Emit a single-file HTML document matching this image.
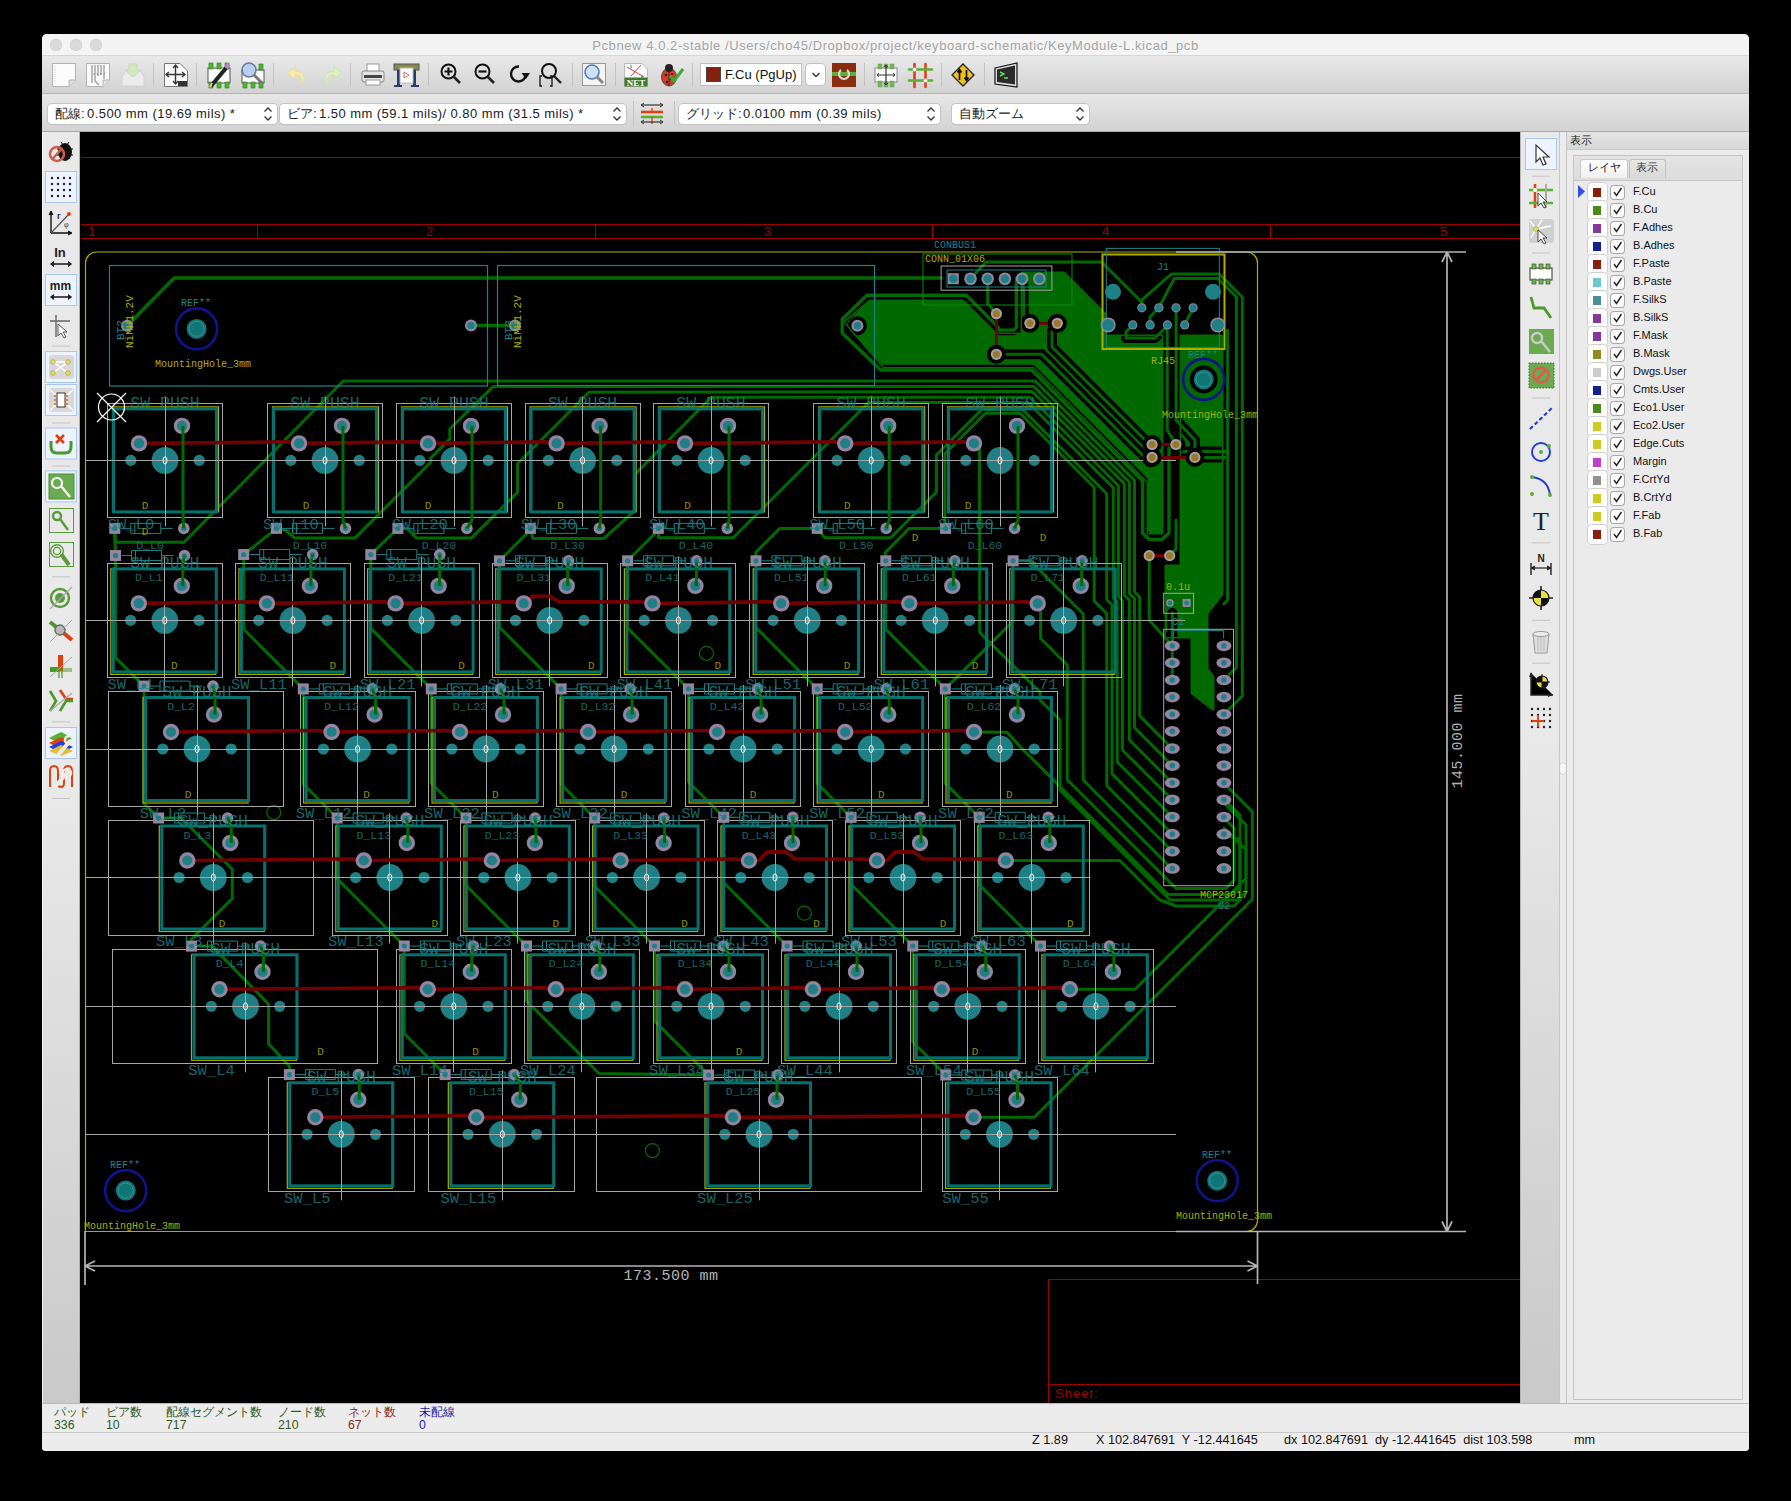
<!DOCTYPE html><html><head><meta charset="utf-8"><style>
*{margin:0;padding:0;box-sizing:border-box}
html,body{width:1791px;height:1501px;background:#000;overflow:hidden;font-family:"Liberation Sans",sans-serif}
div{position:absolute}
svg{position:absolute;left:0;top:0}
.sep{width:1px;background:#c2c2c2}
.combo{height:20px;background:#fff;border-radius:4px;box-shadow:0 0 0 1px #c4c4c4,0 1px 1px rgba(0,0,0,0.12);font-size:13px;color:#1a1a1a;line-height:20px;padding-left:7px;white-space:nowrap;overflow:hidden}
.sel{width:31px;height:31px;background:#eef5ff;border:1px solid #aac8f0}
.sw{width:19px;height:19px;background:#fff;border-radius:4px;box-shadow:0 0 0 1px #d0d0d0}
.cb{width:13px;height:13px;background:#fff;border-radius:3px;box-shadow:0 0 0 1px #a8a8a8}
.ln{font-size:11px;color:#111;line-height:13px}
.st{font-size:12.3px;line-height:13px}
</style></head><body>
<div style="left:42px;top:34px;width:1707px;height:1417px;background:#ececec;border-radius:5px 5px 4px 4px"></div>
<div style="left:42px;top:34px;width:1707px;height:22px;background:#f4f4f4;border-radius:5px 5px 0 0;border-bottom:1px solid #d6d6d6"></div>
<div style="left:50px;top:39px;width:12px;height:12px;border-radius:50%;background:#dadada;box-shadow:inset 0 0 0 0.5px #cacaca"></div>
<div style="left:70px;top:39px;width:12px;height:12px;border-radius:50%;background:#dadada;box-shadow:inset 0 0 0 0.5px #cacaca"></div>
<div style="left:90px;top:39px;width:12px;height:12px;border-radius:50%;background:#dadada;box-shadow:inset 0 0 0 0.5px #cacaca"></div>
<div style="left:42px;top:38px;width:1707px;text-align:center;font-size:13px;line-height:15px;color:#a4a4a4;letter-spacing:0.57px">Pcbnew 4.0.2-stable /Users/cho45/Dropbox/project/keyboard-schematic/KeyModule-L.kicad_pcb</div>
<div style="left:42px;top:56px;width:1707px;height:38px;background:linear-gradient(#e9e9e9,#d2d2d2);border-bottom:1px solid #b5b5b5"></div>
<div style="left:42px;top:94px;width:1707px;height:38px;background:linear-gradient(#e7e7e7,#d3d3d3);border-bottom:1px solid #a9a9a9"></div>
<div style="left:42px;top:132px;width:38px;height:1271px;background:linear-gradient(#e9e9e9 0px,#e9e9e9 668px,#c9c9c9 1271px);border-right:1px solid #b0b0b0;box-shadow:inset 1px 0 0 #f4f4f4"></div>
<div style="left:80px;top:132px;width:1440px;height:1271px;background:#000"></div>
<div style="left:1520px;top:132px;width:40px;height:1271px;background:linear-gradient(#e9e9e9 0px,#e9e9e9 600px,#c9c9c9 1271px);border-left:1px solid #b5b5b5;border-right:1px solid #c6c6c6"></div>
<div style="left:1560px;top:132px;width:7px;height:1271px;background:#ececec;border-right:1px solid #c4c4c4"></div>
<div style="left:1560px;top:763px;width:6px;height:11px;border-radius:3px;background:#f6f6f6;box-shadow:0 0 0 0.5px #c0c0c0"></div>
<div style="left:1567px;top:132px;width:182px;height:1271px;background:#ececec"></div>
<div style="left:1567px;top:132px;width:182px;height:18px;background:linear-gradient(#e4e4e4,#d8d8d8);border-bottom:1px solid #c8c8c8"></div>
<div class="ln" style="left:1570px;top:134px;font-size:11px;color:#222">表示</div>
<div style="left:1573px;top:155px;width:170px;height:1245px;border:1px solid #c4c4c4;background:#ebebeb"></div>
<div style="left:1574px;top:156px;width:168px;height:25px;background:linear-gradient(#e4e4e4,#dcdcdc);border-bottom:1px solid #c8c8c8"></div>
<div style="left:1580px;top:159px;width:48px;height:19px;background:linear-gradient(#ffffff,#f0f0f0);border:1px solid #c8c8c8;border-bottom:none;border-radius:3px 3px 0 0"></div>
<div style="left:1629px;top:159px;width:37px;height:19px;background:linear-gradient(#e8e8e8,#d8d8d8);border:1px solid #c0c0c0;border-bottom:none;border-radius:3px 3px 0 0"></div>
<div class="ln" style="left:1588px;top:161px;color:#222">レイヤ</div>
<div class="ln" style="left:1636px;top:161px;color:#333">表示</div>
<div class="sw" style="left:1588px;top:183px"></div>
<div style="left:1593px;top:188px;width:8px;height:9px;background:#84200c"></div>
<div class="cb" style="left:1611px;top:186px"></div>
<div class="ln" style="left:1633px;top:185px">F.Cu</div>
<div class="sw" style="left:1588px;top:201px"></div>
<div style="left:1593px;top:206px;width:8px;height:9px;background:#4a8a1a"></div>
<div class="cb" style="left:1611px;top:204px"></div>
<div class="ln" style="left:1633px;top:203px">B.Cu</div>
<div class="sw" style="left:1588px;top:219px"></div>
<div style="left:1593px;top:224px;width:8px;height:9px;background:#84389a"></div>
<div class="cb" style="left:1611px;top:222px"></div>
<div class="ln" style="left:1633px;top:221px">F.Adhes</div>
<div class="sw" style="left:1588px;top:237px"></div>
<div style="left:1593px;top:242px;width:8px;height:9px;background:#10208e"></div>
<div class="cb" style="left:1611px;top:240px"></div>
<div class="ln" style="left:1633px;top:239px">B.Adhes</div>
<div class="sw" style="left:1588px;top:255px"></div>
<div style="left:1593px;top:260px;width:8px;height:9px;background:#84200c"></div>
<div class="cb" style="left:1611px;top:258px"></div>
<div class="ln" style="left:1633px;top:257px">F.Paste</div>
<div class="sw" style="left:1588px;top:273px"></div>
<div style="left:1593px;top:278px;width:8px;height:9px;background:#70c4cc"></div>
<div class="cb" style="left:1611px;top:276px"></div>
<div class="ln" style="left:1633px;top:275px">B.Paste</div>
<div class="sw" style="left:1588px;top:291px"></div>
<div style="left:1593px;top:296px;width:8px;height:9px;background:#4a8e96"></div>
<div class="cb" style="left:1611px;top:294px"></div>
<div class="ln" style="left:1633px;top:293px">F.SilkS</div>
<div class="sw" style="left:1588px;top:309px"></div>
<div style="left:1593px;top:314px;width:8px;height:9px;background:#84389a"></div>
<div class="cb" style="left:1611px;top:312px"></div>
<div class="ln" style="left:1633px;top:311px">B.SilkS</div>
<div class="sw" style="left:1588px;top:327px"></div>
<div style="left:1593px;top:332px;width:8px;height:9px;background:#84389a"></div>
<div class="cb" style="left:1611px;top:330px"></div>
<div class="ln" style="left:1633px;top:329px">F.Mask</div>
<div class="sw" style="left:1588px;top:345px"></div>
<div style="left:1593px;top:350px;width:8px;height:9px;background:#8c8c20"></div>
<div class="cb" style="left:1611px;top:348px"></div>
<div class="ln" style="left:1633px;top:347px">B.Mask</div>
<div class="sw" style="left:1588px;top:363px"></div>
<div style="left:1593px;top:368px;width:8px;height:9px;background:#cccccc"></div>
<div class="cb" style="left:1611px;top:366px"></div>
<div class="ln" style="left:1633px;top:365px">Dwgs.User</div>
<div class="sw" style="left:1588px;top:381px"></div>
<div style="left:1593px;top:386px;width:8px;height:9px;background:#10208e"></div>
<div class="cb" style="left:1611px;top:384px"></div>
<div class="ln" style="left:1633px;top:383px">Cmts.User</div>
<div class="sw" style="left:1588px;top:399px"></div>
<div style="left:1593px;top:404px;width:8px;height:9px;background:#4a8a1a"></div>
<div class="cb" style="left:1611px;top:402px"></div>
<div class="ln" style="left:1633px;top:401px">Eco1.User</div>
<div class="sw" style="left:1588px;top:417px"></div>
<div style="left:1593px;top:422px;width:8px;height:9px;background:#cccc20"></div>
<div class="cb" style="left:1611px;top:420px"></div>
<div class="ln" style="left:1633px;top:419px">Eco2.User</div>
<div class="sw" style="left:1588px;top:435px"></div>
<div style="left:1593px;top:440px;width:8px;height:9px;background:#cccc20"></div>
<div class="cb" style="left:1611px;top:438px"></div>
<div class="ln" style="left:1633px;top:437px">Edge.Cuts</div>
<div class="sw" style="left:1588px;top:453px"></div>
<div style="left:1593px;top:458px;width:8px;height:9px;background:#c040cc"></div>
<div class="cb" style="left:1611px;top:456px"></div>
<div class="ln" style="left:1633px;top:455px">Margin</div>
<div class="sw" style="left:1588px;top:471px"></div>
<div style="left:1593px;top:476px;width:8px;height:9px;background:#909090"></div>
<div class="cb" style="left:1611px;top:474px"></div>
<div class="ln" style="left:1633px;top:473px">F.CrtYd</div>
<div class="sw" style="left:1588px;top:489px"></div>
<div style="left:1593px;top:494px;width:8px;height:9px;background:#cccc20"></div>
<div class="cb" style="left:1611px;top:492px"></div>
<div class="ln" style="left:1633px;top:491px">B.CrtYd</div>
<div class="sw" style="left:1588px;top:507px"></div>
<div style="left:1593px;top:512px;width:8px;height:9px;background:#cccc20"></div>
<div class="cb" style="left:1611px;top:510px"></div>
<div class="ln" style="left:1633px;top:509px">F.Fab</div>
<div class="sw" style="left:1588px;top:525px"></div>
<div style="left:1593px;top:530px;width:8px;height:9px;background:#84200c"></div>
<div class="cb" style="left:1611px;top:528px"></div>
<div class="ln" style="left:1633px;top:527px">B.Fab</div>
<div style="left:42px;top:1403px;width:1707px;height:48px;background:#ececec;border-top:1px solid #b8b8b8;border-radius:0 0 4px 4px"></div>
<div style="left:42px;top:1432px;width:1707px;height:1px;background:#c8c8c8"></div>
<div class="st" style="left:54px;top:1406px;color:#2f5a1e;font-size:11.5px">パッド</div>
<div class="st" style="left:54px;top:1419px;color:#2f5a1e">336</div>
<div class="st" style="left:106px;top:1406px;color:#2f5a1e;font-size:11.5px">ビア数</div>
<div class="st" style="left:106px;top:1419px;color:#2f5a1e">10</div>
<div class="st" style="left:166px;top:1406px;color:#2f5a1e;font-size:11.5px">配線セグメント数</div>
<div class="st" style="left:166px;top:1419px;color:#2f5a1e">717</div>
<div class="st" style="left:278px;top:1406px;color:#2f5a1e;font-size:11.5px">ノード数</div>
<div class="st" style="left:278px;top:1419px;color:#2f5a1e">210</div>
<div class="st" style="left:348px;top:1406px;color:#8a2a10;font-size:11.5px">ネット数</div>
<div class="st" style="left:348px;top:1419px;color:#8a2a10">67</div>
<div class="st" style="left:419px;top:1406px;color:#1c1caa;font-size:11.5px">未配線</div>
<div class="st" style="left:419px;top:1419px;color:#1c1caa">0</div>
<div class="st" style="left:1032px;top:1434px;color:#111;white-space:nowrap;font-size:12.7px">Z 1.89</div>
<div class="st" style="left:1096px;top:1434px;color:#111;white-space:nowrap;font-size:12.7px">X 102.847691&nbsp; Y -12.441645</div>
<div class="st" style="left:1284px;top:1434px;color:#111;white-space:nowrap;font-size:12.7px">dx 102.847691&nbsp; dy -12.441645&nbsp; dist 103.598</div>
<div class="st" style="left:1574px;top:1434px;color:#111;white-space:nowrap;font-size:12.7px">mm</div>
<div class="combo" style="left:48px;top:104px;width:229px"></div>
<div style="left:55px;top:105px;font-size:13px;line-height:17px;color:#1a1a1a;white-space:nowrap">配線:</div>
<div style="left:87px;top:105px;font-size:13px;line-height:17px;color:#1a1a1a;white-space:nowrap;letter-spacing:0.45px">0.500 mm (19.69 mils) *</div>
<svg width="1791" height="1501" style="pointer-events:none"><path d="M264.5 111.5 l3.5 -3.5 l3.5 3.5 M264.5 116.5 l3.5 3.5 l3.5 -3.5" fill="none" stroke="#333" stroke-width="1.3"/></svg>
<div class="combo" style="left:280px;top:104px;width:346px"></div>
<div style="left:287px;top:105px;font-size:13px;line-height:17px;color:#1a1a1a;white-space:nowrap">ビア:</div>
<div style="left:319px;top:105px;font-size:13px;line-height:17px;color:#1a1a1a;white-space:nowrap;letter-spacing:0.45px">1.50 mm (59.1 mils)/ 0.80 mm (31.5 mils) *</div>
<svg width="1791" height="1501" style="pointer-events:none"><path d="M613.5 111.5 l3.5 -3.5 l3.5 3.5 M613.5 116.5 l3.5 3.5 l3.5 -3.5" fill="none" stroke="#333" stroke-width="1.3"/></svg>
<div class="combo" style="left:679px;top:104px;width:261px"></div>
<div style="left:686px;top:105px;font-size:13px;line-height:17px;color:#1a1a1a;white-space:nowrap">グリッド:</div>
<div style="left:743px;top:105px;font-size:13px;line-height:17px;color:#1a1a1a;white-space:nowrap;letter-spacing:0.45px">0.0100 mm (0.39 mils)</div>
<svg width="1791" height="1501" style="pointer-events:none"><path d="M927.5 111.5 l3.5 -3.5 l3.5 3.5 M927.5 116.5 l3.5 3.5 l3.5 -3.5" fill="none" stroke="#333" stroke-width="1.3"/></svg>
<div class="combo" style="left:952px;top:104px;width:137px"></div>
<div style="left:959px;top:105px;font-size:13px;line-height:17px;color:#1a1a1a;white-space:nowrap">自動ズーム</div>
<svg width="1791" height="1501" style="pointer-events:none"><path d="M1076.5 111.5 l3.5 -3.5 l3.5 3.5 M1076.5 116.5 l3.5 3.5 l3.5 -3.5" fill="none" stroke="#333" stroke-width="1.3"/></svg>
<div style="left:701px;top:64px;width:100px;height:21px;background:#fff;box-shadow:0 0 0 1px #c0c0c0"></div>
<div style="left:707px;top:68px;width:13px;height:13px;background:#84200c;box-shadow:0 0 0 1px #444"></div>
<div style="left:725px;top:66px;font-size:13px;line-height:17px;color:#111">F.Cu (PgUp)</div>
<div style="left:806px;top:64px;width:19px;height:21px;background:#fff;border-radius:4px;box-shadow:0 0 0 1px #c0c0c0"></div>
<svg width="1791" height="1501"><path d="M812.5 73 l3.5 3.5 l3.5 -3.5" fill="none" stroke="#333" stroke-width="1.4"/></svg>
<svg width="1791" height="1501" viewBox="0 0 1791 1501" style="font-family:'Liberation Sans'"><g transform="translate(51 62)"><path d="M1.5 1.5 H24.5 V18 L18 24.5 H1.5 Z" fill="#fbfbfb" stroke="#b4b4b4"/><path d="M24.5 18 L18 18 L18 24.5" fill="#e0e0e0" stroke="#b4b4b4"/><path d="M4 4 V22" stroke="#d0d0d0" stroke-dasharray="1 1"/></g><g transform="translate(85 62)"><path d="M1.5 1.5 H24.5 V18 L18 24.5 H1.5 Z" fill="#fbfbfb" stroke="#b4b4b4"/><path d="M24.5 18 L18 18 L18 24.5" fill="#e0e0e0" stroke="#b4b4b4"/><path d="M7 3 V21 M10 3 V19 L14 23 M13 3 V14 M16 3 V13 M19 3 V17" stroke="#9a9a9a" stroke-width="1.3" fill="none"/><path d="M8 12 H20" stroke="#8a8a8a" stroke-dasharray="1.5 2"/></g><g transform="translate(120 62)"><path d="M2 15 L6 8 H20 L24 15 V24 H2 Z" fill="#ececec" stroke="#d4d4d4"/><path d="M9 2 H17 V8 H21 L13 15 L5 8 H9 Z" fill="#d4e8c0" stroke="#c4dcb0"/></g><g fill="#c2c2c2"><rect x="153" y="63" width="1" height="23"/><rect x="196" y="63" width="1" height="23"/><rect x="273" y="63" width="1" height="23"/><rect x="350" y="63" width="1" height="23"/><rect x="428" y="63" width="1" height="23"/><rect x="572" y="63" width="1" height="23"/><rect x="615" y="63" width="1" height="23"/><rect x="692" y="63" width="1" height="23"/><rect x="864" y="63" width="1" height="23"/><rect x="941" y="63" width="1" height="23"/><rect x="984" y="63" width="1" height="23"/></g><g transform="translate(163 62)"><path d="M1.5 1.5 H17 L24.5 9 V24.5 H1.5 Z" fill="#fbfbfb" stroke="#777"/><path d="M12.5 3 V22 M3.5 12.5 H22" stroke="#333" stroke-width="1.4"/><path d="M10 6 L12.5 3 L15 6 M10 19 L12.5 22 L15 19 M6 10 L3 12.5 L6 15 M19 10 L22 12.5 L19 15" fill="none" stroke="#333" stroke-width="1.3"/><rect x="15" y="19" width="9" height="5" fill="#333"/></g><g transform="translate(206 62)"><rect x="2" y="6" width="22" height="15" fill="#fff" stroke="#555"/><g fill="#4cb830" stroke="#2d7a1a" stroke-width="0.6"><rect x="3" y="1" width="4" height="6"/><rect x="11" y="1" width="4" height="6"/><rect x="19" y="1" width="4" height="6"/><rect x="3" y="20" width="4" height="6"/><rect x="11" y="20" width="4" height="6"/><rect x="19" y="20" width="4" height="6"/></g><path d="M5 24 L21 5" stroke="#222" stroke-width="4"/><path d="M20 6 L23 2" stroke="#c080d0" stroke-width="4"/><path d="M4 25 L6 21" stroke="#e8d070" stroke-width="2"/></g><g transform="translate(240 62)"><rect x="2" y="8" width="22" height="13" fill="#fff" stroke="#555"/><g fill="#4cb830" stroke="#2d7a1a" stroke-width="0.6"><rect x="3" y="20" width="4" height="6"/><rect x="11" y="20" width="4" height="6"/><rect x="19" y="20" width="4" height="6"/><rect x="19" y="2" width="4" height="6"/></g><circle cx="9" cy="8" r="7" fill="#b8d0ee" stroke="#6a7aa0" stroke-width="1.6"/><path d="M14 13 L22 21" stroke="#777" stroke-width="3"/></g><g transform="translate(284 62)"><path d="M16 23 C24 18 20 9 11 9 L11 5 L3 11 L11 17 L11 13 C17 13 19 18 16 23 Z" fill="#f4eab0" stroke="#eadc98"/></g><g transform="translate(319 62)"><path d="M10 23 C2 18 6 9 15 9 L15 5 L23 11 L15 17 L15 13 C9 13 7 18 10 23 Z" fill="#dcf0c0" stroke="#cce4ac"/></g><g transform="translate(360 62)"><rect x="7" y="2" width="12" height="8" fill="#fff" stroke="#999"/><rect x="2" y="9" width="22" height="11" rx="2" fill="#e4e4e4" stroke="#888"/><rect x="4" y="13" width="18" height="3" fill="#444"/><rect x="6" y="18" width="14" height="5" fill="#fff" stroke="#999"/></g><g transform="translate(393 62)"><rect x="1" y="2" width="25" height="6" fill="#8a8a50" stroke="#555"/><rect x="4" y="8" width="3" height="17" fill="#2a3a6a"/><rect x="20" y="8" width="3" height="17" fill="#2a3a6a"/><rect x="7" y="6" width="13" height="15" fill="#fff" stroke="#bbb"/><path d="M11 10 L16 13 L11 16 Z" fill="none" stroke="#d04040" stroke-width="0.8"/><rect x="1" y="23" width="8" height="2" fill="#2a3a6a"/><rect x="18" y="23" width="8" height="2" fill="#2a3a6a"/></g><g transform="translate(439 62)"><circle cx="9.5" cy="9.5" r="7" fill="none" stroke="#111" stroke-width="2"/><path d="M14.5 14.5 L21 21" stroke="#222" stroke-width="2.6"/><path d="M9.5 5.5 V13.5 M5.5 9.5 H13.5" stroke="#111" stroke-width="2.2"/></g><g transform="translate(473 62)"><circle cx="9.5" cy="9.5" r="7" fill="none" stroke="#111" stroke-width="2"/><path d="M14.5 14.5 L21 21" stroke="#222" stroke-width="2.6"/><path d="M5.5 9.5 H13.5" stroke="#111" stroke-width="2.2"/></g><g transform="translate(507 62)"><path d="M19 12 A7.5 7.5 0 1 1 12 4.5" fill="none" stroke="#111" stroke-width="2.4"/><path d="M14.5 11 L23 11 L19 17 Z" fill="#111"/></g><g transform="translate(538 62)"><circle cx="11" cy="9" r="7" fill="none" stroke="#111" stroke-width="2"/><path d="M16 14 L23 21" stroke="#222" stroke-width="2.4"/><path d="M4 14 H2 V24 H4 M12 14 H14 V24 H12" fill="none" stroke="#111" stroke-width="1.3"/></g><g transform="translate(581 62)"><rect x="1.5" y="1.5" width="23" height="22" fill="#f4f4f4" stroke="#999"/><circle cx="11" cy="10" r="7" fill="#cfe0f6" stroke="#5a78a8" stroke-width="1.6"/><path d="M16 15 L22 21" stroke="#888" stroke-width="3"/></g><g transform="translate(623 62)"><path d="M1.5 1.5 H19 L24.5 7 V24.5 H1.5 Z" fill="#fff" stroke="#bbb"/><path d="M4 5 L21 15 M18 3 L8 14" stroke="#d04040" stroke-width="1"/><path d="M8 3 L8 6 M19 13 L19 16" stroke="#3a8a3a" stroke-width="1"/><rect x="1.5" y="15.5" width="23" height="9" fill="#3a7a30"/><text x="13" y="23.5" font-size="9" font-weight="bold" text-anchor="middle" fill="#fff" font-family="Liberation Serif">NET</text></g><g transform="translate(658 62)"><ellipse cx="11" cy="15" rx="7.5" ry="9" fill="#d43a28" stroke="#333" stroke-width="0.8"/><circle cx="11" cy="6" r="4" fill="#222"/><g fill="#222"><circle cx="8" cy="13" r="1.3"/><circle cx="13" cy="17" r="1.3"/><circle cx="9" cy="20" r="1.2"/><circle cx="14" cy="12" r="1"/></g><path d="M11 8 V24" stroke="#222" stroke-width="0.8"/><path d="M12 14 L16 19 L25 7" fill="none" stroke="#3aa83a" stroke-width="3"/></g><g transform="translate(832 63)"><rect x="0" y="0" width="24" height="24" fill="#8a2c10"/><rect x="0" y="9" width="24" height="4" fill="#5cb030"/><path d="M15 7 A5 5 0 1 1 9 7" fill="none" stroke="#d8d8d8" stroke-width="2.2"/></g><g transform="translate(874 63)"><rect x="1" y="5" width="22" height="14" fill="#fff" stroke="#888"/><g fill="#66c040" stroke="#888" stroke-width="0.5"><rect x="4" y="1" width="4" height="5"/><rect x="16" y="1" width="4" height="5"/><rect x="4" y="18" width="4" height="6"/><rect x="16" y="18" width="4" height="6"/><rect x="10" y="1" width="4" height="4"/><rect x="10" y="19" width="4" height="5"/></g><path d="M12 2 V22 M3 12 H21" stroke="#333" stroke-width="1.2"/><path d="M10 4 L12 2 L14 4 M10 20 L12 22 L14 20 M5 10 L3 12 L5 14 M19 10 L21 12 L19 14" fill="none" stroke="#333"/></g><g transform="translate(908 63)"><path d="M6.5 1 V24 M17.5 1 V24" stroke="#e04010" stroke-width="2.6" stroke-linecap="round"/><path d="M1 6.5 H24 M1 17.5 H24" stroke="#5cb030" stroke-width="2.6" stroke-linecap="round"/><circle cx="6.5" cy="6.5" r="2" fill="#fff" stroke="#999" stroke-width="0.6"/><circle cx="17.5" cy="17.5" r="2" fill="#fff" stroke="#999" stroke-width="0.6"/></g><g transform="translate(951 63)"><path d="M12 1 L23 12 L12 23 L1 12 Z" fill="#f0c020" stroke="#222" stroke-width="1.3"/><path d="M8.5 17 V7 M6.5 9.5 L8.5 6.5 L10.5 9.5 M15.5 7 V17 M13.5 14.5 L15.5 17.5 L17.5 14.5" fill="none" stroke="#111" stroke-width="1.7"/></g><g transform="translate(994 62)"><path d="M1 6 L23 1 V25 L1 22 Z" fill="#ddd" stroke="#111" stroke-width="1.2"/><path d="M3 7.5 L21 3.5 V22.5 L3 20 Z" fill="#2a2a2a"/><path d="M6 10 L10 12 L6 14 M10 16 H14" stroke="#5ce05c" stroke-width="1.4" fill="none"/></g><g fill="#c2c2c2"><rect x="633" y="101" width="1" height="24"/><rect x="674" y="101" width="1" height="24"/></g><g transform="translate(639 100)"><path d="M2 5 H24" stroke="#333" stroke-width="1.2"/><path d="M5 3 L2 5 L5 7 M21 3 L24 5 L21 7" fill="none" stroke="#333"/><path d="M2 12 H24" stroke="#e04010" stroke-width="2.6"/><path d="M2 17 H24" stroke="#5cb030" stroke-width="2.6"/><path d="M13 8 V12 M13 17 V24" stroke="#e04010" stroke-width="1.4"/><path d="M2 22 H24" stroke="#333" stroke-width="1.2"/><path d="M5 20 L2 22 L5 24 M21 20 L24 22 L21 24" fill="none" stroke="#333"/></g><rect x="45.5" y="171.5" width="31" height="31" fill="#edf4ff" stroke="#a8c8f0" stroke-width="1"/><rect x="45.5" y="274.5" width="31" height="31" fill="#edf4ff" stroke="#a8c8f0" stroke-width="1"/><rect x="45.5" y="351.5" width="31" height="31" fill="#edf4ff" stroke="#a8c8f0" stroke-width="1"/><rect x="45.5" y="384.5" width="31" height="31" fill="#edf4ff" stroke="#a8c8f0" stroke-width="1"/><rect x="45.5" y="428.0" width="31" height="31" fill="#edf4ff" stroke="#a8c8f0" stroke-width="1"/><rect x="45.5" y="470.9" width="31" height="31" fill="#edf4ff" stroke="#a8c8f0" stroke-width="1"/><rect x="45.5" y="727.5" width="31" height="31" fill="#edf4ff" stroke="#a8c8f0" stroke-width="1"/><rect x="52" y="345.6" width="18" height="1" fill="#c4c4c4"/><rect x="52" y="422.5" width="18" height="1" fill="#c4c4c4"/><rect x="52" y="465.5" width="18" height="1" fill="#c4c4c4"/><rect x="52" y="576.3" width="18" height="1" fill="#c4c4c4"/><rect x="52" y="721.4" width="18" height="1" fill="#c4c4c4"/><rect x="52" y="798" width="18" height="1" fill="#c4c4c4"/><g transform="translate(48 139)"><ellipse cx="17" cy="13" rx="7" ry="9" fill="#111"/><path d="M13 3 L15 6 M21 3 L19 6 M9 10 H11 M23 10 H25 M9 16 H11 M23 16 H25" stroke="#111"/><circle cx="9" cy="15" r="7" fill="none" stroke="#c8604a" stroke-width="2.6"/><path d="M4.5 20 L13.5 10" stroke="#c8604a" stroke-width="2.6"/></g><g transform="translate(48 174)"><circle cx="4" cy="4" r="1.2" fill="#222"/><circle cx="4" cy="10" r="1.2" fill="#222"/><circle cx="4" cy="16" r="1.2" fill="#222"/><circle cx="4" cy="22" r="1.2" fill="#222"/><circle cx="10" cy="4" r="1.2" fill="#222"/><circle cx="10" cy="10" r="1.2" fill="#222"/><circle cx="10" cy="16" r="1.2" fill="#222"/><circle cx="10" cy="22" r="1.2" fill="#222"/><circle cx="16" cy="4" r="1.2" fill="#222"/><circle cx="16" cy="10" r="1.2" fill="#222"/><circle cx="16" cy="16" r="1.2" fill="#222"/><circle cx="16" cy="22" r="1.2" fill="#222"/><circle cx="22" cy="4" r="1.2" fill="#222"/><circle cx="22" cy="10" r="1.2" fill="#222"/><circle cx="22" cy="16" r="1.2" fill="#222"/><circle cx="22" cy="22" r="1.2" fill="#222"/></g><g transform="translate(48 209)"><path d="M3 24 H23 M3 24 V3" stroke="#111" stroke-width="1.4"/><path d="M1 6 L3 2 L5 6 M20 22 L24 24 L20 26" fill="#111" stroke="#111"/><path d="M3 24 L21 5" stroke="#555" stroke-width="1.2"/><circle cx="21" cy="5" r="2" fill="#e04010"/><text x="9" y="10" font-size="9" font-weight="bold" fill="#333" font-family="Liberation Sans">r</text><text x="16" y="18" font-size="8" fill="#333" font-family="Liberation Serif">φ</text></g><g transform="translate(48 243)"><text x="12" y="14" font-size="13" font-weight="bold" text-anchor="middle" fill="#222" font-family="Liberation Sans">In</text><path d="M3 21 H23" stroke="#222" stroke-width="1.6"/><path d="M6 18.5 L2.5 21 L6 23.5 M20 18.5 L23.5 21 L20 23.5" fill="#222" stroke="#222"/></g><g transform="translate(48 277)"><text x="12.5" y="13" font-size="12" font-weight="bold" text-anchor="middle" fill="#222" font-family="Liberation Sans">mm</text><path d="M3 20 H23" stroke="#222" stroke-width="1.6"/><path d="M6 17.5 L2.5 20 L6 22.5 M20 17.5 L23.5 20 L20 22.5" fill="#222" stroke="#222"/></g><g transform="translate(48 313)"><path d="M2 8 H22 M8 2 V24" stroke="#666" stroke-width="1.4"/><path d="M10 11 V23 L13 20 L16 25 L18 24 L15 19 L19 19 Z" fill="#fff" stroke="#444" stroke-width="0.9"/></g><g transform="translate(48 354)"><rect x="1" y="1" width="25" height="24" rx="3" fill="#d8d8d8"/><path d="M5 8 L20 19 M20 8 L5 19 M5 8 L20 8" stroke="#fff" stroke-width="1.5"/><g fill="#e8e040" stroke="#888" stroke-width="0.5"><circle cx="5" cy="8" r="2.4"/><circle cx="20" cy="8" r="2.4"/><circle cx="5" cy="19" r="2.4"/><circle cx="20" cy="19" r="2.4"/></g></g><g transform="translate(48 387)"><rect x="1" y="1" width="25" height="24" rx="3" fill="#d8d8d8"/><path d="M2 3 L25 23 M25 3 L2 23" stroke="#fff" stroke-width="1.4"/><rect x="9" y="6" width="8" height="14" fill="#fff" stroke="#333"/><g fill="#e08030"><rect x="6" y="8" width="2" height="2"/><rect x="6" y="12" width="2" height="2"/><rect x="6" y="16" width="2" height="2"/><rect x="18" y="8" width="2" height="2"/><rect x="18" y="12" width="2" height="2"/><rect x="18" y="16" width="2" height="2"/></g></g><g transform="translate(48 431)"><path d="M3 10 V16 Q3 22 9 22 H17 Q23 22 23 16 V10" fill="none" stroke="#4a9a2a" stroke-width="3"/><path d="M8 4 L16 12 M16 4 L8 12" stroke="#e04010" stroke-width="2.6"/></g><g transform="translate(48 473)"><rect x="1" y="1" width="25" height="25" fill="#6aaa50" stroke="#4a8a30"/><circle cx="9" cy="10" r="5" fill="none" stroke="#fff" stroke-width="2.2"/><path d="M13 13 L22 24" stroke="#fff" stroke-width="2.2"/></g><g transform="translate(48 507)"><rect x="1.5" y="1.5" width="24" height="24" fill="none" stroke="#5a9a3a"/><circle cx="9" cy="9" r="4" fill="none" stroke="#5a9a3a" stroke-width="2.4"/><path d="M12 12 L20 23" stroke="#5a9a3a" stroke-width="2.4"/></g><g transform="translate(48 541)"><rect x="1.5" y="1.5" width="24" height="24" fill="none" stroke="#5a9a3a"/><circle cx="9" cy="10" r="5" fill="none" stroke="#5a9a3a" stroke-width="4"/><circle cx="9" cy="10" r="5" fill="none" stroke="#fff" stroke-width="1.2"/><path d="M13 13 L21 24" stroke="#5a9a3a" stroke-width="4"/></g><g transform="translate(48 585)"><circle cx="12" cy="13" r="9" fill="none" stroke="#5a9a3a" stroke-width="2.4"/><circle cx="12" cy="13" r="5" fill="#5a9a3a"/><path d="M2 24 L24 2" stroke="#aaa" stroke-width="1.2"/></g><g transform="translate(48 618)"><path d="M2 4 L12 12" stroke="#4a9a2a" stroke-width="4"/><path d="M12 12 L24 22" stroke="#e04010" stroke-width="4"/><circle cx="12" cy="12" r="5" fill="#bbb" stroke="#666" stroke-width="1.4"/><path d="M2 24 L24 2" stroke="#aaa" stroke-width="1"/></g><g transform="translate(48 653)"><rect x="10" y="2" width="5" height="16" fill="#e04010"/><rect x="2" y="14" width="10" height="5" fill="#4a9a2a"/><path d="M12 16 H24 M12 18 H24 M11 18 V25 M14 18 V25" stroke="#4a9a2a" stroke-width="1.2"/><path d="M2 24 L24 4" stroke="#aaa" stroke-width="1"/></g><g transform="translate(48 687)"><path d="M2 4 L8 14 L2 24" fill="none" stroke="#4a9a2a" stroke-width="2.6"/><path d="M12 3 L18 12 H25" fill="none" stroke="#e04010" stroke-width="2.6"/><path d="M12 24 L18 14 H25" fill="none" stroke="#4a9a2a" stroke-width="2.6"/><path d="M2 24 L24 6" stroke="#aaa" stroke-width="1.2"/></g><g transform="translate(48 730)"><path d="M1 8 L13 2 L25 8 L13 14 Z" fill="#5ab030"/><path d="M1 13 L13 7 L25 13 L13 19 Z" fill="#e04010"/><path d="M1 17 L13 11 L25 17 L13 23 Z" fill="#2040e0"/><path d="M1 21 L13 15 L25 21 L13 26 Z" fill="#e0c030"/><path d="M10 25 L22 11" stroke="#eee" stroke-width="4"/><circle cx="21" cy="10" r="4" fill="none" stroke="#eee" stroke-width="2.5"/></g><g transform="translate(48 763)"><path d="M2 24 V8 Q2 3 6 3 Q10 3 10 8 V20 Q10 24 13 24 Q16 24 16 20 V8 Q16 3 20 3 Q24 3 24 8 V24" fill="none" stroke="#e04010" stroke-width="2"/><path d="M6 25 L18 11" stroke="#eee" stroke-width="4"/><circle cx="19" cy="10" r="4" fill="none" stroke="#eee" stroke-width="2.5"/></g><rect x="1525.5" y="138.5" width="31" height="31" fill="#edf4ff" stroke="#a8c8f0"/><rect x="1532" y="175.7" width="18" height="1" fill="#c4c4c4"/><rect x="1532" y="252.5" width="18" height="1" fill="#c4c4c4"/><rect x="1532" y="397.5" width="18" height="1" fill="#c4c4c4"/><rect x="1532" y="542.4" width="18" height="1" fill="#c4c4c4"/><rect x="1532" y="619.8" width="18" height="1" fill="#c4c4c4"/><rect x="1532" y="662.7" width="18" height="1" fill="#c4c4c4"/><g transform="translate(1528 141)"><path d="M8 4 V21 L12 17 L15 24 L18 23 L15 16 L21 16 Z" fill="#fff" stroke="#333" stroke-width="1.2"/></g><g transform="translate(1528 183)"><path d="M7 1 V25" stroke="#e04010" stroke-width="2.6"/><path d="M1 7 H25 M1 20 H25" stroke="#5cb030" stroke-width="2.4"/><path d="M18 1 V25" stroke="#aaa" stroke-width="2"/><circle cx="7" cy="7" r="2" fill="#fff"/><path d="M10 10 V23 L13 20 L16 25 L18 24 L15 19 L19 19 Z" fill="#fff" stroke="#333" stroke-width="0.9"/></g><g transform="translate(1528 218)"><rect x="1" y="1" width="25" height="24" rx="3" fill="#d0d0d0"/><path d="M8 11 L2 3 M8 11 L14 2 M8 11 L3 20 M8 11 L23 8" stroke="#fff" stroke-width="1.4"/><circle cx="8" cy="11" r="2.5" fill="#e8e040" stroke="#888" stroke-width="0.5"/><path d="M10 12 V24 L13 21 L16 26 L18 25 L15 20 L19 20 Z" fill="#fff" stroke="#333" stroke-width="0.9"/></g><g transform="translate(1528 261)"><rect x="2" y="7" width="22" height="12" fill="#fff" stroke="#333"/><g fill="#66c040" stroke="#333" stroke-width="0.6"><rect x="4" y="3" width="4" height="5"/><rect x="11" y="3" width="4" height="5"/><rect x="18" y="3" width="4" height="5"/><rect x="4" y="18" width="4" height="5"/><rect x="11" y="18" width="4" height="5"/><rect x="18" y="18" width="4" height="5"/></g></g><g transform="translate(1528 294)"><path d="M3 3 L6 14 H16 L23 24" fill="none" stroke="#4a9a2a" stroke-width="2.8"/></g><g transform="translate(1528 328)"><rect x="1" y="1" width="25" height="25" fill="#6aaa50"/><circle cx="9" cy="10" r="5" fill="none" stroke="#ccc" stroke-width="2.4"/><path d="M13 13 L22 24" stroke="#ccc" stroke-width="2.4"/></g><g transform="translate(1528 362)"><rect x="1" y="1" width="25" height="25" fill="#6aaa50" stroke="#3a7a20" stroke-dasharray="1.5 1.5"/><circle cx="13" cy="13" r="7.5" fill="none" stroke="#d8604a" stroke-width="2.6"/><path d="M8 18 L18 8" stroke="#d8604a" stroke-width="2.6"/></g><g transform="translate(1528 405)"><path d="M2 24 L24 3" stroke="#2040d0" stroke-width="2.2" stroke-dasharray="4 2.5"/></g><g transform="translate(1528 439)"><circle cx="13" cy="13" r="9" fill="none" stroke="#2040d0" stroke-width="2"/><circle cx="13" cy="13" r="2" fill="#5cb030"/><circle cx="21" cy="7" r="2" fill="#5cb030"/></g><g transform="translate(1528 473)"><path d="M4 4 Q20 6 22 22" fill="none" stroke="#2040d0" stroke-width="2"/><circle cx="4" cy="4" r="2" fill="#5cb030"/><circle cx="22" cy="22" r="2" fill="#5cb030"/><circle cx="4" cy="21" r="2" fill="#5cb030"/></g><g transform="translate(1528 506)"><text x="13" y="24" font-size="26" text-anchor="middle" fill="#222" font-family="Liberation Serif">T</text></g><g transform="translate(1528 551)"><text x="13" y="11" font-size="10" font-weight="bold" text-anchor="middle" fill="#222" font-family="Liberation Sans">N</text><path d="M3 12 V24 M23 12 V24" stroke="#222" stroke-width="1.4"/><path d="M3 17 H23" stroke="#222" stroke-width="1.2"/><path d="M7 15 L3 17 L7 19 M19 15 L23 17 L19 19" fill="#222" stroke="#222"/></g><g transform="translate(1528 585)"><path d="M13 1 V25 M1 13 H25" stroke="#222" stroke-width="1.6"/><circle cx="13" cy="13" r="8" fill="#e8e040" stroke="#111" stroke-width="1.2"/><path d="M13 5 A8 8 0 0 0 5 13 H13 Z M13 21 A8 8 0 0 0 21 13 H13 Z" fill="#111"/></g><g transform="translate(1528 628)"><path d="M5 6 H21 L19 25 H7 Z" fill="#ddd" stroke="#999"/><ellipse cx="13" cy="6" rx="8" ry="2.5" fill="#eee" stroke="#999"/><path d="M10 9 V23 M13 9 V23 M16 9 V23" stroke="#bbb"/></g><g transform="translate(1528 671)"><path d="M3 2 V24 H25" stroke="#222" stroke-width="1.4"/><path d="M1 6 L3 1 L5 6 M20 22 L25 24 L20 26" fill="#222"/><circle cx="14" cy="11" r="6" fill="#e8e040" stroke="#111" stroke-width="1.2"/><path d="M14 5 A6 6 0 0 0 8 11 H14 Z M14 17 A6 6 0 0 0 20 11 H14 Z" fill="#111"/><path d="M14 3 V19 M6 11 H22" stroke="#111"/></g><g transform="translate(1528 705)"><circle cx="4" cy="4" r="1.2" fill="#222"/><circle cx="4" cy="10" r="1.2" fill="#222"/><circle cx="4" cy="16" r="1.2" fill="#222"/><circle cx="4" cy="22" r="1.2" fill="#222"/><circle cx="10" cy="4" r="1.2" fill="#222"/><circle cx="10" cy="10" r="1.2" fill="#222"/><circle cx="10" cy="16" r="1.2" fill="#222"/><circle cx="10" cy="22" r="1.2" fill="#222"/><circle cx="16" cy="4" r="1.2" fill="#222"/><circle cx="16" cy="10" r="1.2" fill="#222"/><circle cx="16" cy="16" r="1.2" fill="#222"/><circle cx="16" cy="22" r="1.2" fill="#222"/><circle cx="22" cy="4" r="1.2" fill="#222"/><circle cx="22" cy="10" r="1.2" fill="#222"/><circle cx="22" cy="16" r="1.2" fill="#222"/><circle cx="22" cy="22" r="1.2" fill="#222"/><path d="M10 10 V22 M4 16 H16" stroke="#e04010" stroke-width="1.8"/></g><path d="M1578 185 L1585 191.5 L1578 198 Z" fill="#3050f0"/><path d="M1614 192 L1616.5 195.5 L1621.5 188" fill="none" stroke="#222" stroke-width="1.4"/><path d="M1614 210 L1616.5 213.5 L1621.5 206" fill="none" stroke="#222" stroke-width="1.4"/><path d="M1614 228 L1616.5 231.5 L1621.5 224" fill="none" stroke="#222" stroke-width="1.4"/><path d="M1614 246 L1616.5 249.5 L1621.5 242" fill="none" stroke="#222" stroke-width="1.4"/><path d="M1614 264 L1616.5 267.5 L1621.5 260" fill="none" stroke="#222" stroke-width="1.4"/><path d="M1614 282 L1616.5 285.5 L1621.5 278" fill="none" stroke="#222" stroke-width="1.4"/><path d="M1614 300 L1616.5 303.5 L1621.5 296" fill="none" stroke="#222" stroke-width="1.4"/><path d="M1614 318 L1616.5 321.5 L1621.5 314" fill="none" stroke="#222" stroke-width="1.4"/><path d="M1614 336 L1616.5 339.5 L1621.5 332" fill="none" stroke="#222" stroke-width="1.4"/><path d="M1614 354 L1616.5 357.5 L1621.5 350" fill="none" stroke="#222" stroke-width="1.4"/><path d="M1614 372 L1616.5 375.5 L1621.5 368" fill="none" stroke="#222" stroke-width="1.4"/><path d="M1614 390 L1616.5 393.5 L1621.5 386" fill="none" stroke="#222" stroke-width="1.4"/><path d="M1614 408 L1616.5 411.5 L1621.5 404" fill="none" stroke="#222" stroke-width="1.4"/><path d="M1614 426 L1616.5 429.5 L1621.5 422" fill="none" stroke="#222" stroke-width="1.4"/><path d="M1614 444 L1616.5 447.5 L1621.5 440" fill="none" stroke="#222" stroke-width="1.4"/><path d="M1614 462 L1616.5 465.5 L1621.5 458" fill="none" stroke="#222" stroke-width="1.4"/><path d="M1614 480 L1616.5 483.5 L1621.5 476" fill="none" stroke="#222" stroke-width="1.4"/><path d="M1614 498 L1616.5 501.5 L1621.5 494" fill="none" stroke="#222" stroke-width="1.4"/><path d="M1614 516 L1616.5 519.5 L1621.5 512" fill="none" stroke="#222" stroke-width="1.4"/><path d="M1614 534 L1616.5 537.5 L1621.5 530" fill="none" stroke="#222" stroke-width="1.4"/></svg>
<svg width="1791" height="1501" viewBox="0 0 1791 1501">
<defs><clipPath id="cv"><rect x="81" y="133" width="1439" height="1270"/></clipPath>
<g id="swf"><rect x="-52.5" y="-53.5" width="106" height="105" fill="none" stroke="#adad00" stroke-width="1.2"/><rect x="-51.5" y="-51.5" width="103" height="103" fill="none" stroke="#04716f" stroke-width="3"/><circle cx="0" cy="0" r="13.4" fill="#1e8084"/><circle cx="-34.2" cy="0" r="5.6" fill="#1e8084"/><circle cx="34.2" cy="0" r="5.6" fill="#1e8084"/></g>
<g id="swf2"><rect x="-54" y="-51.5" width="105" height="105.5" fill="none" stroke="#adad00" stroke-width="1.2"/><rect x="-51.5" y="-51.5" width="103" height="103" fill="none" stroke="#04716f" stroke-width="3"/><circle cx="0" cy="0" r="13.4" fill="#1e8084"/><circle cx="-34.2" cy="0" r="5.6" fill="#1e8084"/><circle cx="34.2" cy="0" r="5.6" fill="#1e8084"/></g>
<g id="swp"><circle cx="-26" cy="-17" r="8.2" fill="#9484a0"/><circle cx="-26" cy="-17" r="5.1" fill="#1e8084"/><circle cx="17" cy="-34.5" r="8.2" fill="#9484a0"/><circle cx="17" cy="-34.5" r="5.1" fill="#1e8084"/><ellipse cx="0" cy="0" rx="2" ry="3.6" fill="none" stroke="#fff" stroke-width="1"/></g>
<g id="dio"><rect x="-5.5" y="-5.5" width="11" height="11" fill="#9484a0"/><circle cx="0" cy="0" r="2.6" fill="#1e8084"/><circle cx="69" cy="0" r="5.8" fill="#9484a0"/><circle cx="69" cy="0" r="2.6" fill="#1e8084"/><path d="M6 0 H16 M46 0 H58 M16 -5 H46 V5 H16 Z M20 -5 V5" fill="none" stroke="#1e8084" stroke-width="1"/></g>
<clipPath id="zclip"><polygon points="845,322 870,301 963,301 996,334 1022,334 1022,273 1064,273 1105,314 1105,336 1162,336 1162,533 1148,533 1148,482 1034,367 884,367"/><polygon points="1181,336 1222,336 1222,594 1207,613 1207,669 1213,677 1213,709 1192,693 1192,637 1166,637 1166,566 1181,566"/></clipPath>
</defs>
<g clip-path="url(#cv)">
<g stroke="#a00000" stroke-width="1" fill="none"><path d="M81 157.5 H1520 M81 224.5 H1520 M81 238.5 H1520"/><path d="M257.5 224.5 V238.5 M595.5 224.5 V238.5 M932.5 224.5 V238.5 M1270.5 224.5 V238.5"/><path d="M1048.5 1403 V1279.5 H1520 M1048.5 1384.5 H1520"/></g>
<g fill="#a00000" font-size="13" font-family="Liberation Sans"><text x="88" y="236">1</text><text x="426" y="236">2</text><text x="764" y="236">3</text><text x="1102" y="236">4</text><text x="1440" y="236">5</text><text x="1055" y="1398" font-size="13" letter-spacing="1">Sheet:</text></g>
<polygon points="845,322 870,301 963,301 996,334 1022,334 1022,273 1064,273 1105,314 1105,336 1162,336 1162,533 1148,533 1148,482 1034,367 884,367" fill="#006a00" stroke="#006a00" stroke-width="3" stroke-linejoin="round"/>
<polygon points="1181,336 1222,336 1222,594 1207,613 1207,669 1213,677 1213,709 1192,693 1192,637 1166,637 1166,566 1181,566" fill="#006a00" stroke="#006a00" stroke-width="3" stroke-linejoin="round"/>
<g clip-path="url(#zclip)"><polyline points="127,325.8 174.2,278 941,278" stroke="#000" stroke-width="10.6" fill="none" stroke-linejoin="round" stroke-linecap="round"/><polyline points="471,325.5 515,325.5" stroke="#000" stroke-width="10.6" fill="none" stroke-linejoin="round" stroke-linecap="round"/><polyline points="114.8,528.4 115,542.2 184,542.2 343.2,381 1035.1,381 1134.5,480.4000000000001 1134.5,592.0 1139.7,597.2 1139.7,715.8800000000001 1172.3,748.48" stroke="#000" stroke-width="10.0" fill="none" stroke-linejoin="round" stroke-linecap="round"/><polyline points="276.5,528.4 285,530 294.5,537.9 355.2,537.9 430.7,462.3 430.7,458.1 449.9,438.9 449.9,428.8 493.1,386.6 1033.9,386.6 1129.4,482.1 1129.4,593.5 1134.5,598.5999999999999 1134.5,727.8100000000001 1172.3,765.61" stroke="#000" stroke-width="10.0" fill="none" stroke-linejoin="round" stroke-linecap="round"/><polyline points="397.9,528.4 406.7,528.3 416.3,537.9 471.5,537.9 517.6,492.3 517.6,463.5 588.9,392.3 1031.9,391.4 1124.3,483.79999999999984 1124.3,595.0 1129.3,600.0 1129.3,739.74 1172.3,782.74" stroke="#000" stroke-width="10.0" fill="none" stroke-linejoin="round" stroke-linecap="round"/><polyline points="530.4,528.4 532.9,538.4 604,538.4 635.4,510 635.4,473.9 711.3,397.3 1030,397.3 1118.4,485.7000000000001 1118.4,596.5 1122.4,600.5 1122.4,749.9700000000001 1172.3,799.87" stroke="#000" stroke-width="10.0" fill="none" stroke-linejoin="round" stroke-linecap="round"/><polyline points="658.3,528.4 658.5,537.8 733.2,537.8 868.5,402.5 1028,402.5 1113.3,487.79999999999995 1113.3,598.0 1117.2,601.9000000000001 1117.2,761.9000000000001 1172.3,817.0" stroke="#000" stroke-width="10.0" fill="none" stroke-linejoin="round" stroke-linecap="round"/><polyline points="817.2,528.4 824.8,537.7 890.8,537.7 936.4,492.1 936.4,455 981.9,409.4 1022.3,409.4 1106.7,493.80000000000007 1106.7,599.5 1112,604.8 1112,773.83 1172.3,834.13" stroke="#000" stroke-width="10.0" fill="none" stroke-linejoin="round" stroke-linecap="round"/><polyline points="945.6,528.4 944.8,522 944.8,453.8 985.5,413.3 1020,413.3 1094.2,487.50000000000006 1094.2,601.0 1106.8,613.5999999999999 1106.8,785.76 1172.3,851.26" stroke="#000" stroke-width="10.0" fill="none" stroke-linejoin="round" stroke-linecap="round"/><polyline points="1013.3,560.6 1030,560.6 1083.2,613.8 1083.2,780 1172.3,869.1" stroke="#000" stroke-width="10.0" fill="none" stroke-linejoin="round" stroke-linecap="round"/><polyline points="1038.2,603.6 1040.6,612 1040.6,638.5 1067.3,665.2 1067.3,779.7 1176,888.4 1226,888.4 1234,880 1234,828 1223.9,818" stroke="#000" stroke-width="10.0" fill="none" stroke-linejoin="round" stroke-linecap="round"/><polyline points="974,732 1006.9,732.2 1021.6,748.1 1168,894.5 1232,894.5 1240,886 1240,815 1223.9,799" stroke="#000" stroke-width="10.0" fill="none" stroke-linejoin="round" stroke-linecap="round"/><polyline points="979.5,443 979.7,632.5 1040,692 1040,700 1060,720 1060,790 1170,900 1238,900 1246,892 1246,850 1224,828" stroke="#000" stroke-width="10.0" fill="none" stroke-linejoin="round" stroke-linecap="round"/><polyline points="1016.4,278 1016.4,327.2 1013.5,330.1 999.7,330.1 997.5,326.5 966.3,295.2 866.9,295.2 842.2,319.2 842.2,333 880.7,370 1031.6,370 1142.6,481 1142.6,533 1149,539.4 1162,539.4 1169,533 1169,448" stroke="#000" stroke-width="10.4" fill="none" stroke-linejoin="round" stroke-linecap="round"/><polyline points="996.5,354.3 1041.8,354.3 1150,462.5" stroke="#000" stroke-width="10.0" fill="none" stroke-linejoin="round" stroke-linecap="round"/><polyline points="114.8,528.4 115.5,555.5" stroke="#000" stroke-width="10.0" fill="none" stroke-linejoin="round" stroke-linecap="round"/><polyline points="276.5,528.4 276.5,528.4 243.7,554.5" stroke="#000" stroke-width="10.0" fill="none" stroke-linejoin="round" stroke-linecap="round"/><polyline points="397.9,528.4 397.9,528.4 370.8,554.6" stroke="#000" stroke-width="10.0" fill="none" stroke-linejoin="round" stroke-linecap="round"/><polyline points="530.4,528.4 530.4,529.9 499.5,560.8" stroke="#000" stroke-width="10.0" fill="none" stroke-linejoin="round" stroke-linecap="round"/><polyline points="658.3,528.4 658.3,530.1 627.6,560.8" stroke="#000" stroke-width="10.0" fill="none" stroke-linejoin="round" stroke-linecap="round"/><polyline points="115.5,555.5 115.5,657.6 144,686.1" stroke="#000" stroke-width="10.0" fill="none" stroke-linejoin="round" stroke-linecap="round"/><polyline points="243.7,554.5 243.7,629.3 303.3,688.9" stroke="#000" stroke-width="10.0" fill="none" stroke-linejoin="round" stroke-linecap="round"/><polyline points="370.8,554.6 370.8,628.4 431.3,688.9" stroke="#000" stroke-width="10.0" fill="none" stroke-linejoin="round" stroke-linecap="round"/><polyline points="499.5,560.8 499.5,627.3 561.1,688.9" stroke="#000" stroke-width="10.0" fill="none" stroke-linejoin="round" stroke-linecap="round"/><polyline points="627.6,560.8 627.6,628.0 688.5,688.9" stroke="#000" stroke-width="10.0" fill="none" stroke-linejoin="round" stroke-linecap="round"/><polyline points="756,560.8 756,627.6999999999999 817.2,688.9" stroke="#000" stroke-width="10.0" fill="none" stroke-linejoin="round" stroke-linecap="round"/><polyline points="885.8,560.8 885.8,629.4 945.3,688.9" stroke="#000" stroke-width="10.0" fill="none" stroke-linejoin="round" stroke-linecap="round"/><polyline points="1013.1,560.8 1013.1,621.0999999999999 945.3,688.9" stroke="#000" stroke-width="10.0" fill="none" stroke-linejoin="round" stroke-linecap="round"/><polyline points="144,686.1 144,803.4 158.6,818" stroke="#000" stroke-width="10.0" fill="none" stroke-linejoin="round" stroke-linecap="round"/><polyline points="303.3,688.9 303.3,784.1 337.2,818" stroke="#000" stroke-width="10.0" fill="none" stroke-linejoin="round" stroke-linecap="round"/><polyline points="431.3,688.9 431.3,783.3 466,818" stroke="#000" stroke-width="10.0" fill="none" stroke-linejoin="round" stroke-linecap="round"/><polyline points="561.1,688.9 561.1,784.4 594.7,818" stroke="#000" stroke-width="10.0" fill="none" stroke-linejoin="round" stroke-linecap="round"/><polyline points="688.5,688.9 688.5,782.0 723.8,817.3" stroke="#000" stroke-width="10.0" fill="none" stroke-linejoin="round" stroke-linecap="round"/><polyline points="817.2,688.9 817.2,783.4 851.1,817.3" stroke="#000" stroke-width="10.0" fill="none" stroke-linejoin="round" stroke-linecap="round"/><polyline points="945.3,688.9 945.3,783.3999999999999 979.2,817.3" stroke="#000" stroke-width="10.0" fill="none" stroke-linejoin="round" stroke-linecap="round"/><polyline points="337.2,818 337.2,878.9 404.3,946" stroke="#000" stroke-width="10.0" fill="none" stroke-linejoin="round" stroke-linecap="round"/><polyline points="466,818 466,885.5 526.5,946" stroke="#000" stroke-width="10.0" fill="none" stroke-linejoin="round" stroke-linecap="round"/><polyline points="594.7,818 594.7,886.2 654.5,946" stroke="#000" stroke-width="10.0" fill="none" stroke-linejoin="round" stroke-linecap="round"/><polyline points="723.8,817.3 723.8,882.6999999999999 787.1,946" stroke="#000" stroke-width="10.0" fill="none" stroke-linejoin="round" stroke-linecap="round"/><polyline points="851.1,817.3 851.1,884.3000000000001 912.8,946" stroke="#000" stroke-width="10.0" fill="none" stroke-linejoin="round" stroke-linecap="round"/><polyline points="979.2,817.3 979.2,884.7 1040.5,946" stroke="#000" stroke-width="10.0" fill="none" stroke-linejoin="round" stroke-linecap="round"/><polyline points="404.3,946 404.3,1033.6999999999998 445.2,1074.6" stroke="#000" stroke-width="10.0" fill="none" stroke-linejoin="round" stroke-linecap="round"/><polyline points="654.5,946 654.5,1020.9 708.6,1075" stroke="#000" stroke-width="10.0" fill="none" stroke-linejoin="round" stroke-linecap="round"/><polyline points="912.8,946 912.8,1042.0 945.8,1075" stroke="#000" stroke-width="10.0" fill="none" stroke-linejoin="round" stroke-linecap="round"/><polyline points="817.2,528.4 779.7,528.4 755.7,552.4 756,560.8" stroke="#000" stroke-width="10.0" fill="none" stroke-linejoin="round" stroke-linecap="round"/><polyline points="945.6,528.4 909,528.4 885.1,552.8 885.8,560.8" stroke="#000" stroke-width="10.0" fill="none" stroke-linejoin="round" stroke-linecap="round"/><polyline points="526.5,946 526.5,1000.8 599.2,1073.5 708.6,1075" stroke="#000" stroke-width="10.0" fill="none" stroke-linejoin="round" stroke-linecap="round"/><polyline points="191.5,946.1 212,946.1 268.6,1004.2 268.6,1044 289.4,1066 289.4,1074.6" stroke="#000" stroke-width="10.0" fill="none" stroke-linejoin="round" stroke-linecap="round"/><polyline points="158.6,818 181,818 232.3,869.2 232.3,898.6 191.5,939 191.5,946.1" stroke="#000" stroke-width="10.0" fill="none" stroke-linejoin="round" stroke-linecap="round"/><polyline points="1227.6,330 1227.6,600 1223.9,604" stroke="#000" stroke-width="10.0" fill="none" stroke-linejoin="round" stroke-linecap="round"/><polyline points="970.5,278.7 986,262 1101.6,262 1141.6,302 1141.8,307.8" stroke="#000" stroke-width="10.0" fill="none" stroke-linejoin="round" stroke-linecap="round"/><polyline points="1141.8,307.8 1141.6,300.2 1171.3,274.1 1219.2,274.1 1242.3,297 1242.3,696 1223.9,714.3" stroke="#000" stroke-width="10.0" fill="none" stroke-linejoin="round" stroke-linecap="round"/><polyline points="1159,307.8 1174.2,278.5 1217.8,278.5 1236.4,297 1236.4,667.5 1223.9,679.9" stroke="#000" stroke-width="10.0" fill="none" stroke-linejoin="round" stroke-linecap="round"/><polyline points="1132.8,324.9 1126,332 1126,338 1155,338 1167.2,326" stroke="#000" stroke-width="10.0" fill="none" stroke-linejoin="round" stroke-linecap="round"/><polyline points="1150,324.9 1150,317 1159,307.8" stroke="#000" stroke-width="10.0" fill="none" stroke-linejoin="round" stroke-linecap="round"/><polyline points="1167.2,324.9 1167.2,430 1175.9,444.5" stroke="#000" stroke-width="10.0" fill="none" stroke-linejoin="round" stroke-linecap="round"/><polyline points="1176.1,307.8 1176.1,420 1194.9,440 1194.9,457.4" stroke="#000" stroke-width="10.0" fill="none" stroke-linejoin="round" stroke-linecap="round"/><polyline points="1184.6,324.9 1193.2,307.8" stroke="#000" stroke-width="10.0" fill="none" stroke-linejoin="round" stroke-linecap="round"/><polyline points="987.7,278.7 987.7,303.8 996.4,313.7" stroke="#000" stroke-width="10.0" fill="none" stroke-linejoin="round" stroke-linecap="round"/><polyline points="1022.1,278.7 1023.6,290 1023.6,316 1029.9,323.3" stroke="#000" stroke-width="10.0" fill="none" stroke-linejoin="round" stroke-linecap="round"/><polyline points="1057.3,323.3 1052,331 1052,347 1150,445 1152.1,444.5" stroke="#000" stroke-width="10.0" fill="none" stroke-linejoin="round" stroke-linecap="round"/><polyline points="1172.3,613 1172.3,680" stroke="#000" stroke-width="10.0" fill="none" stroke-linejoin="round" stroke-linecap="round"/><polyline points="1194.9,457.4 1227.6,457.4" stroke="#000" stroke-width="10.0" fill="none" stroke-linejoin="round" stroke-linecap="round"/><polyline points="1181,451.5 1227.6,451.5" stroke="#000" stroke-width="10.0" fill="none" stroke-linejoin="round" stroke-linecap="round"/><polyline points="1169.7,555.6 1176,549 1176,520" stroke="#000" stroke-width="10.0" fill="none" stroke-linejoin="round" stroke-linecap="round"/><polyline points="1149.2,555.6 1149.2,620 1172.3,645.7" stroke="#000" stroke-width="10.0" fill="none" stroke-linejoin="round" stroke-linecap="round"/><polyline points="1005.8,860.5 1119.8,860.5 1153.6,894.1 1160,900 1176,906 1234,906 1240,900 1240,840 1223.9,834.2" stroke="#000" stroke-width="10.0" fill="none" stroke-linejoin="round" stroke-linecap="round"/><polyline points="1069.9,989.3 1135,989.3 1246,878.3 1246,825 1223.9,802.9" stroke="#000" stroke-width="10.0" fill="none" stroke-linejoin="round" stroke-linecap="round"/><polyline points="973.5,1117.3 1034.3,1117.3 1252.3,899.3 1252.3,811.6 1223.9,783.2" stroke="#000" stroke-width="10.0" fill="none" stroke-linejoin="round" stroke-linecap="round"/></g>
<g stroke="#006a00" fill="none" stroke-linejoin="round" stroke-linecap="round"><polyline points="127,325.8 174.2,278 941,278" stroke-width="3.6"/><polyline points="471,325.5 515,325.5" stroke-width="3.6"/><polyline points="114.8,528.4 115,542.2 184,542.2 343.2,381 1035.1,381 1134.5,480.4000000000001 1134.5,592.0 1139.7,597.2 1139.7,715.8800000000001 1172.3,748.48" stroke-width="3.0"/><polyline points="276.5,528.4 285,530 294.5,537.9 355.2,537.9 430.7,462.3 430.7,458.1 449.9,438.9 449.9,428.8 493.1,386.6 1033.9,386.6 1129.4,482.1 1129.4,593.5 1134.5,598.5999999999999 1134.5,727.8100000000001 1172.3,765.61" stroke-width="3.0"/><polyline points="397.9,528.4 406.7,528.3 416.3,537.9 471.5,537.9 517.6,492.3 517.6,463.5 588.9,392.3 1031.9,391.4 1124.3,483.79999999999984 1124.3,595.0 1129.3,600.0 1129.3,739.74 1172.3,782.74" stroke-width="3.0"/><polyline points="530.4,528.4 532.9,538.4 604,538.4 635.4,510 635.4,473.9 711.3,397.3 1030,397.3 1118.4,485.7000000000001 1118.4,596.5 1122.4,600.5 1122.4,749.9700000000001 1172.3,799.87" stroke-width="3.0"/><polyline points="658.3,528.4 658.5,537.8 733.2,537.8 868.5,402.5 1028,402.5 1113.3,487.79999999999995 1113.3,598.0 1117.2,601.9000000000001 1117.2,761.9000000000001 1172.3,817.0" stroke-width="3.0"/><polyline points="817.2,528.4 824.8,537.7 890.8,537.7 936.4,492.1 936.4,455 981.9,409.4 1022.3,409.4 1106.7,493.80000000000007 1106.7,599.5 1112,604.8 1112,773.83 1172.3,834.13" stroke-width="3.0"/><polyline points="945.6,528.4 944.8,522 944.8,453.8 985.5,413.3 1020,413.3 1094.2,487.50000000000006 1094.2,601.0 1106.8,613.5999999999999 1106.8,785.76 1172.3,851.26" stroke-width="3.0"/><polyline points="1013.3,560.6 1030,560.6 1083.2,613.8 1083.2,780 1172.3,869.1" stroke-width="3.0"/><polyline points="1038.2,603.6 1040.6,612 1040.6,638.5 1067.3,665.2 1067.3,779.7 1176,888.4 1226,888.4 1234,880 1234,828 1223.9,818" stroke-width="3.0"/><polyline points="974,732 1006.9,732.2 1021.6,748.1 1168,894.5 1232,894.5 1240,886 1240,815 1223.9,799" stroke-width="3.0"/><polyline points="979.5,443 979.7,632.5 1040,692 1040,700 1060,720 1060,790 1170,900 1238,900 1246,892 1246,850 1224,828" stroke-width="3.0"/><polyline points="1016.4,278 1016.4,327.2 1013.5,330.1 999.7,330.1 997.5,326.5 966.3,295.2 866.9,295.2 842.2,319.2 842.2,333 880.7,370 1031.6,370 1142.6,481 1142.6,533 1149,539.4 1162,539.4 1169,533 1169,448" stroke-width="3.4"/><polyline points="996.5,354.3 1041.8,354.3 1150,462.5" stroke-width="3.0"/><polyline points="114.8,528.4 115.5,555.5" stroke-width="3.0"/><polyline points="276.5,528.4 276.5,528.4 243.7,554.5" stroke-width="3.0"/><polyline points="397.9,528.4 397.9,528.4 370.8,554.6" stroke-width="3.0"/><polyline points="530.4,528.4 530.4,529.9 499.5,560.8" stroke-width="3.0"/><polyline points="658.3,528.4 658.3,530.1 627.6,560.8" stroke-width="3.0"/><polyline points="115.5,555.5 115.5,657.6 144,686.1" stroke-width="3.0"/><polyline points="243.7,554.5 243.7,629.3 303.3,688.9" stroke-width="3.0"/><polyline points="370.8,554.6 370.8,628.4 431.3,688.9" stroke-width="3.0"/><polyline points="499.5,560.8 499.5,627.3 561.1,688.9" stroke-width="3.0"/><polyline points="627.6,560.8 627.6,628.0 688.5,688.9" stroke-width="3.0"/><polyline points="756,560.8 756,627.6999999999999 817.2,688.9" stroke-width="3.0"/><polyline points="885.8,560.8 885.8,629.4 945.3,688.9" stroke-width="3.0"/><polyline points="1013.1,560.8 1013.1,621.0999999999999 945.3,688.9" stroke-width="3.0"/><polyline points="144,686.1 144,803.4 158.6,818" stroke-width="3.0"/><polyline points="303.3,688.9 303.3,784.1 337.2,818" stroke-width="3.0"/><polyline points="431.3,688.9 431.3,783.3 466,818" stroke-width="3.0"/><polyline points="561.1,688.9 561.1,784.4 594.7,818" stroke-width="3.0"/><polyline points="688.5,688.9 688.5,782.0 723.8,817.3" stroke-width="3.0"/><polyline points="817.2,688.9 817.2,783.4 851.1,817.3" stroke-width="3.0"/><polyline points="945.3,688.9 945.3,783.3999999999999 979.2,817.3" stroke-width="3.0"/><polyline points="337.2,818 337.2,878.9 404.3,946" stroke-width="3.0"/><polyline points="466,818 466,885.5 526.5,946" stroke-width="3.0"/><polyline points="594.7,818 594.7,886.2 654.5,946" stroke-width="3.0"/><polyline points="723.8,817.3 723.8,882.6999999999999 787.1,946" stroke-width="3.0"/><polyline points="851.1,817.3 851.1,884.3000000000001 912.8,946" stroke-width="3.0"/><polyline points="979.2,817.3 979.2,884.7 1040.5,946" stroke-width="3.0"/><polyline points="404.3,946 404.3,1033.6999999999998 445.2,1074.6" stroke-width="3.0"/><polyline points="654.5,946 654.5,1020.9 708.6,1075" stroke-width="3.0"/><polyline points="912.8,946 912.8,1042.0 945.8,1075" stroke-width="3.0"/><polyline points="817.2,528.4 779.7,528.4 755.7,552.4 756,560.8" stroke-width="3.0"/><polyline points="945.6,528.4 909,528.4 885.1,552.8 885.8,560.8" stroke-width="3.0"/><polyline points="526.5,946 526.5,1000.8 599.2,1073.5 708.6,1075" stroke-width="3.0"/><polyline points="191.5,946.1 212,946.1 268.6,1004.2 268.6,1044 289.4,1066 289.4,1074.6" stroke-width="3.0"/><polyline points="158.6,818 181,818 232.3,869.2 232.3,898.6 191.5,939 191.5,946.1" stroke-width="3.0"/><polyline points="1227.6,330 1227.6,600 1223.9,604" stroke-width="3.0"/><polyline points="970.5,278.7 986,262 1101.6,262 1141.6,302 1141.8,307.8" stroke-width="3.0"/><polyline points="1141.8,307.8 1141.6,300.2 1171.3,274.1 1219.2,274.1 1242.3,297 1242.3,696 1223.9,714.3" stroke-width="3.0"/><polyline points="1159,307.8 1174.2,278.5 1217.8,278.5 1236.4,297 1236.4,667.5 1223.9,679.9" stroke-width="3.0"/><polyline points="1132.8,324.9 1126,332 1126,338 1155,338 1167.2,326" stroke-width="3.0"/><polyline points="1150,324.9 1150,317 1159,307.8" stroke-width="3.0"/><polyline points="1167.2,324.9 1167.2,430 1175.9,444.5" stroke-width="3.0"/><polyline points="1176.1,307.8 1176.1,420 1194.9,440 1194.9,457.4" stroke-width="3.0"/><polyline points="1184.6,324.9 1193.2,307.8" stroke-width="3.0"/><polyline points="987.7,278.7 987.7,303.8 996.4,313.7" stroke-width="3.0"/><polyline points="1022.1,278.7 1023.6,290 1023.6,316 1029.9,323.3" stroke-width="3.0"/><polyline points="1057.3,323.3 1052,331 1052,347 1150,445 1152.1,444.5" stroke-width="3.0"/><polyline points="1172.3,613 1172.3,680" stroke-width="3.0"/><polyline points="1194.9,457.4 1227.6,457.4" stroke-width="3.0"/><polyline points="1181,451.5 1227.6,451.5" stroke-width="3.0"/><polyline points="1169.7,555.6 1176,549 1176,520" stroke-width="3.0"/><polyline points="1149.2,555.6 1149.2,620 1172.3,645.7" stroke-width="3.0"/><polyline points="1005.8,860.5 1119.8,860.5 1153.6,894.1 1160,900 1176,906 1234,906 1240,900 1240,840 1223.9,834.2" stroke-width="3.0"/><polyline points="1069.9,989.3 1135,989.3 1246,878.3 1246,825 1223.9,802.9" stroke-width="3.0"/><polyline points="973.5,1117.3 1034.3,1117.3 1252.3,899.3 1252.3,811.6 1223.9,783.2" stroke-width="3.0"/></g>
<path d="M85.5 263 A11 11 0 0 1 96.5 252 H1246.5 A11 11 0 0 1 1257.5 263 V1220.5 A11 11 0 0 1 1246.5 1231.5 H85.5 Z" fill="none" stroke="#adad00" stroke-width="1.2"/>
<rect x="109.5" y="265.5" width="378" height="120.5" fill="none" stroke="#1e8084" stroke-width="1.2"/>
<rect x="497.5" y="265.5" width="377" height="120" fill="none" stroke="#1e8084" stroke-width="1.2"/>
<rect x="923" y="254" width="149" height="51" fill="none" stroke="#0a8a0a" stroke-width="1"/>
<rect x="1102.5" y="254.5" width="122" height="94.5" fill="none" stroke="#adad00" stroke-width="2"/>
<rect x="1106.3" y="248.4" width="113" height="99" fill="none" stroke="#1e8084" stroke-width="1"/>
<circle cx="706.5" cy="653.3" r="7" fill="none" stroke="#006a00" stroke-width="1.3"/>
<circle cx="273.8" cy="812.5" r="7" fill="none" stroke="#006a00" stroke-width="1.3"/>
<circle cx="804.4" cy="913.2" r="7" fill="none" stroke="#006a00" stroke-width="1.3"/>
<circle cx="652.4" cy="1150.6" r="7" fill="none" stroke="#006a00" stroke-width="1.3"/>
<g stroke="#b4b4b4" stroke-width="1.7" fill="none"><path d="M85 1231 V1285 M1257.5 1231 V1284 M85 1266 H1257.5 M85 1266 l10 -5 M85 1266 l10 5 M1257.5 1266 l-10 -5 M1257.5 1266 l-10 5"/><path d="M1176 252 H1466 M1176 1231.5 H1466 M1447 252 V1231.5 M1447 252 l-5 10 M1447 252 l5 10 M1447 1231.5 l-5 -10 M1447 1231.5 l5 -10"/></g>
<text x="671" y="1280" fill="#b4b4b4" font-family="Liberation Mono" font-size="15" text-anchor="middle" letter-spacing="0.5">173.500 mm</text>
<text x="0" y="0" transform="translate(1462 741) rotate(-90)" fill="#b4b4b4" font-family="Liberation Mono" font-size="15" text-anchor="middle" letter-spacing="0.5">145.000 mm</text>
<rect x="107.5" y="403.5" width="115.0" height="114.0" fill="none" stroke="#a6a6a6" stroke-width="1"/>
<use href="#swf" x="165" y="460.4"/>
<line x1="165.5" y1="396.4" x2="165.5" y2="526.4" stroke="#a6a6a6" stroke-width="1"/>
<rect x="267.5" y="403.5" width="115.0" height="114.0" fill="none" stroke="#a6a6a6" stroke-width="1"/>
<use href="#swf" x="325" y="460.4"/>
<line x1="325.5" y1="396.4" x2="325.5" y2="526.4" stroke="#a6a6a6" stroke-width="1"/>
<rect x="396.5" y="403.5" width="115.0" height="114.0" fill="none" stroke="#a6a6a6" stroke-width="1"/>
<use href="#swf" x="454" y="460.4"/>
<line x1="454.5" y1="396.4" x2="454.5" y2="526.4" stroke="#a6a6a6" stroke-width="1"/>
<rect x="525.5" y="403.5" width="115.0" height="114.0" fill="none" stroke="#a6a6a6" stroke-width="1"/>
<use href="#swf" x="582.6" y="460.4"/>
<line x1="582.5" y1="396.4" x2="582.5" y2="526.4" stroke="#a6a6a6" stroke-width="1"/>
<rect x="653.5" y="403.5" width="115.0" height="114.0" fill="none" stroke="#a6a6a6" stroke-width="1"/>
<use href="#swf" x="711" y="460.4"/>
<line x1="711.5" y1="396.4" x2="711.5" y2="526.4" stroke="#a6a6a6" stroke-width="1"/>
<rect x="813.5" y="403.5" width="115.0" height="114.0" fill="none" stroke="#a6a6a6" stroke-width="1"/>
<use href="#swf" x="871.2" y="460.4"/>
<line x1="871.5" y1="396.4" x2="871.5" y2="526.4" stroke="#a6a6a6" stroke-width="1"/>
<rect x="942.5" y="403.5" width="115.0" height="114.0" fill="none" stroke="#a6a6a6" stroke-width="1"/>
<use href="#swf" x="1000" y="460.4"/>
<line x1="1000.5" y1="396.4" x2="1000.5" y2="526.4" stroke="#a6a6a6" stroke-width="1"/>
<line x1="85" y1="460.5" x2="1176" y2="460.5" stroke="#a6a6a6" stroke-width="1"/>
<rect x="107.5" y="563.5" width="115.0" height="114.0" fill="none" stroke="#a6a6a6" stroke-width="1"/>
<use href="#swf2" x="164.8" y="620.4"/>
<line x1="164.5" y1="556.4" x2="164.5" y2="686.4" stroke="#a6a6a6" stroke-width="1"/>
<rect x="235.5" y="563.5" width="115.0" height="114.0" fill="none" stroke="#a6a6a6" stroke-width="1"/>
<use href="#swf2" x="292.9" y="620.4"/>
<line x1="292.5" y1="556.4" x2="292.5" y2="686.4" stroke="#a6a6a6" stroke-width="1"/>
<rect x="364.5" y="563.5" width="115.0" height="114.0" fill="none" stroke="#a6a6a6" stroke-width="1"/>
<use href="#swf2" x="421.6" y="620.4"/>
<line x1="421.5" y1="556.4" x2="421.5" y2="686.4" stroke="#a6a6a6" stroke-width="1"/>
<rect x="492.5" y="563.5" width="115.0" height="114.0" fill="none" stroke="#a6a6a6" stroke-width="1"/>
<use href="#swf2" x="549.7" y="620.4"/>
<line x1="549.5" y1="556.4" x2="549.5" y2="686.4" stroke="#a6a6a6" stroke-width="1"/>
<rect x="620.5" y="563.5" width="115.0" height="114.0" fill="none" stroke="#a6a6a6" stroke-width="1"/>
<use href="#swf2" x="678.4" y="620.4"/>
<line x1="678.5" y1="556.4" x2="678.5" y2="686.4" stroke="#a6a6a6" stroke-width="1"/>
<rect x="749.5" y="563.5" width="115.0" height="114.0" fill="none" stroke="#a6a6a6" stroke-width="1"/>
<use href="#swf2" x="807.2" y="620.4"/>
<line x1="807.5" y1="556.4" x2="807.5" y2="686.4" stroke="#a6a6a6" stroke-width="1"/>
<rect x="877.5" y="563.5" width="115.0" height="114.0" fill="none" stroke="#a6a6a6" stroke-width="1"/>
<use href="#swf2" x="935.3" y="620.4"/>
<line x1="935.5" y1="556.4" x2="935.5" y2="686.4" stroke="#a6a6a6" stroke-width="1"/>
<rect x="1006.5" y="563.5" width="115.0" height="114.0" fill="none" stroke="#a6a6a6" stroke-width="1"/>
<use href="#swf2" x="1063.7" y="620.4"/>
<line x1="1063.5" y1="556.4" x2="1063.5" y2="686.4" stroke="#a6a6a6" stroke-width="1"/>
<line x1="85" y1="620.5" x2="1185" y2="620.5" stroke="#a6a6a6" stroke-width="1"/>
<rect x="108.5" y="691.5" width="175.0" height="115.0" fill="none" stroke="#a6a6a6" stroke-width="1"/>
<use href="#swf2" x="197" y="749.0"/>
<line x1="197.5" y1="685.0" x2="197.5" y2="815.0" stroke="#a6a6a6" stroke-width="1"/>
<rect x="300.5" y="691.5" width="115.0" height="115.0" fill="none" stroke="#a6a6a6" stroke-width="1"/>
<use href="#swf2" x="357.6" y="749.0"/>
<line x1="357.5" y1="685.0" x2="357.5" y2="815.0" stroke="#a6a6a6" stroke-width="1"/>
<rect x="428.5" y="691.5" width="115.0" height="115.0" fill="none" stroke="#a6a6a6" stroke-width="1"/>
<use href="#swf2" x="486" y="749.0"/>
<line x1="486.5" y1="685.0" x2="486.5" y2="815.0" stroke="#a6a6a6" stroke-width="1"/>
<rect x="556.5" y="691.5" width="115.0" height="115.0" fill="none" stroke="#a6a6a6" stroke-width="1"/>
<use href="#swf2" x="614.1" y="749.0"/>
<line x1="614.5" y1="685.0" x2="614.5" y2="815.0" stroke="#a6a6a6" stroke-width="1"/>
<rect x="685.5" y="691.5" width="115.0" height="115.0" fill="none" stroke="#a6a6a6" stroke-width="1"/>
<use href="#swf2" x="743.1" y="749.0"/>
<line x1="743.5" y1="685.0" x2="743.5" y2="815.0" stroke="#a6a6a6" stroke-width="1"/>
<rect x="813.5" y="691.5" width="115.0" height="115.0" fill="none" stroke="#a6a6a6" stroke-width="1"/>
<use href="#swf2" x="871.2" y="749.0"/>
<line x1="871.5" y1="685.0" x2="871.5" y2="815.0" stroke="#a6a6a6" stroke-width="1"/>
<rect x="942.5" y="691.5" width="115.0" height="115.0" fill="none" stroke="#a6a6a6" stroke-width="1"/>
<use href="#swf2" x="1000" y="749.0"/>
<line x1="1000.5" y1="685.0" x2="1000.5" y2="815.0" stroke="#a6a6a6" stroke-width="1"/>
<line x1="85" y1="749.5" x2="1060" y2="749.5" stroke="#a6a6a6" stroke-width="1"/>
<rect x="108.5" y="820.5" width="205.0" height="115.0" fill="none" stroke="#a6a6a6" stroke-width="1"/>
<use href="#swf2" x="213.3" y="877.5"/>
<line x1="213.5" y1="813.5" x2="213.5" y2="943.5" stroke="#a6a6a6" stroke-width="1"/>
<rect x="332.5" y="820.5" width="115.0" height="115.0" fill="none" stroke="#a6a6a6" stroke-width="1"/>
<use href="#swf2" x="389.8" y="877.5"/>
<line x1="389.5" y1="813.5" x2="389.5" y2="943.5" stroke="#a6a6a6" stroke-width="1"/>
<rect x="460.5" y="820.5" width="115.0" height="115.0" fill="none" stroke="#a6a6a6" stroke-width="1"/>
<use href="#swf2" x="517.9" y="877.5"/>
<line x1="517.5" y1="813.5" x2="517.5" y2="943.5" stroke="#a6a6a6" stroke-width="1"/>
<rect x="589.5" y="820.5" width="115.0" height="115.0" fill="none" stroke="#a6a6a6" stroke-width="1"/>
<use href="#swf2" x="646.6" y="877.5"/>
<line x1="646.5" y1="813.5" x2="646.5" y2="943.5" stroke="#a6a6a6" stroke-width="1"/>
<rect x="717.5" y="820.5" width="115.0" height="115.0" fill="none" stroke="#a6a6a6" stroke-width="1"/>
<use href="#swf2" x="775" y="877.5"/>
<line x1="775.5" y1="813.5" x2="775.5" y2="943.5" stroke="#a6a6a6" stroke-width="1"/>
<rect x="845.5" y="820.5" width="115.0" height="115.0" fill="none" stroke="#a6a6a6" stroke-width="1"/>
<use href="#swf2" x="903" y="877.5"/>
<line x1="903.5" y1="813.5" x2="903.5" y2="943.5" stroke="#a6a6a6" stroke-width="1"/>
<rect x="974.5" y="820.5" width="115.0" height="115.0" fill="none" stroke="#a6a6a6" stroke-width="1"/>
<use href="#swf2" x="1031.8" y="877.5"/>
<line x1="1031.5" y1="813.5" x2="1031.5" y2="943.5" stroke="#a6a6a6" stroke-width="1"/>
<line x1="85" y1="877.5" x2="1090" y2="877.5" stroke="#a6a6a6" stroke-width="1"/>
<rect x="112.5" y="949.5" width="265.0" height="114.0" fill="none" stroke="#a6a6a6" stroke-width="1"/>
<use href="#swf2" x="245.5" y="1006.3"/>
<line x1="245.5" y1="942.3" x2="245.5" y2="1072.3" stroke="#a6a6a6" stroke-width="1"/>
<rect x="396.5" y="949.5" width="115.0" height="114.0" fill="none" stroke="#a6a6a6" stroke-width="1"/>
<use href="#swf2" x="453.8" y="1006.3"/>
<line x1="453.5" y1="942.3" x2="453.5" y2="1072.3" stroke="#a6a6a6" stroke-width="1"/>
<rect x="524.5" y="949.5" width="115.0" height="114.0" fill="none" stroke="#a6a6a6" stroke-width="1"/>
<use href="#swf2" x="581.9" y="1006.3"/>
<line x1="581.5" y1="942.3" x2="581.5" y2="1072.3" stroke="#a6a6a6" stroke-width="1"/>
<rect x="653.5" y="949.5" width="115.0" height="114.0" fill="none" stroke="#a6a6a6" stroke-width="1"/>
<use href="#swf2" x="711" y="1006.3"/>
<line x1="711.5" y1="942.3" x2="711.5" y2="1072.3" stroke="#a6a6a6" stroke-width="1"/>
<rect x="781.5" y="949.5" width="115.0" height="114.0" fill="none" stroke="#a6a6a6" stroke-width="1"/>
<use href="#swf2" x="839" y="1006.3"/>
<line x1="839.5" y1="942.3" x2="839.5" y2="1072.3" stroke="#a6a6a6" stroke-width="1"/>
<rect x="910.5" y="949.5" width="115.0" height="114.0" fill="none" stroke="#a6a6a6" stroke-width="1"/>
<use href="#swf2" x="967.8" y="1006.3"/>
<line x1="967.5" y1="942.3" x2="967.5" y2="1072.3" stroke="#a6a6a6" stroke-width="1"/>
<rect x="1038.5" y="949.5" width="115.0" height="114.0" fill="none" stroke="#a6a6a6" stroke-width="1"/>
<use href="#swf2" x="1095.9" y="1006.3"/>
<line x1="1095.5" y1="942.3" x2="1095.5" y2="1072.3" stroke="#a6a6a6" stroke-width="1"/>
<line x1="85" y1="1006.5" x2="1176" y2="1006.5" stroke="#a6a6a6" stroke-width="1"/>
<rect x="268.5" y="1077.5" width="146.0" height="114.0" fill="none" stroke="#a6a6a6" stroke-width="1"/>
<use href="#swf2" x="341.3" y="1134.3"/>
<line x1="341.5" y1="1070.3" x2="341.5" y2="1200.3" stroke="#a6a6a6" stroke-width="1"/>
<rect x="428.5" y="1077.5" width="146.0" height="114.0" fill="none" stroke="#a6a6a6" stroke-width="1"/>
<use href="#swf2" x="502.3" y="1134.3"/>
<line x1="502.5" y1="1070.3" x2="502.5" y2="1200.3" stroke="#a6a6a6" stroke-width="1"/>
<rect x="596.5" y="1077.5" width="325.0" height="114.0" fill="none" stroke="#a6a6a6" stroke-width="1"/>
<use href="#swf2" x="759" y="1134.3"/>
<line x1="759.5" y1="1070.3" x2="759.5" y2="1200.3" stroke="#a6a6a6" stroke-width="1"/>
<rect x="942.5" y="1077.5" width="115.0" height="114.0" fill="none" stroke="#a6a6a6" stroke-width="1"/>
<use href="#swf2" x="999.5" y="1134.3"/>
<line x1="999.5" y1="1070.3" x2="999.5" y2="1200.3" stroke="#a6a6a6" stroke-width="1"/>
<line x1="85" y1="1134.5" x2="1176" y2="1134.5" stroke="#a6a6a6" stroke-width="1"/>
<polyline points="139.0,443.4 283.0,441.9 289.0,441.9 293.0,443.4 299.0,443.4 412.0,441.9 418.0,441.9 422.0,443.4 428.0,443.4 540.6,441.9 546.6,441.9 550.6,443.4 556.6,443.4 669.0,441.9 675.0,441.9 679.0,443.4 685.0,443.4 829.2,441.9 835.2,441.9 839.2,443.4 845.2,443.4 958.0,441.9 964.0,441.9 968.0,443.4 974.0,443.4" stroke="#720000" stroke-width="3.6" fill="none" stroke-linejoin="round"/>
<polyline points="138.8,603.4 250.9,601.9 256.9,601.9 260.9,603.4 266.9,603.4 379.6,601.9 385.6,601.9 389.6,603.4 395.6,603.4 507.7,601.9 513.7,601.9 517.7,603.4 523.7,603.4 529.7,603.4 531.7,596.4 550.7,596.4 558.7,601.9 636.4,601.9 642.4,601.9 646.4,603.4 652.4,603.4 765.2,601.9 771.2,601.9 775.2,603.4 781.2,603.4 893.3,601.9 899.3,601.9 903.3,603.4 909.3,603.4 1021.7,601.9 1027.7,601.9 1031.7,603.4 1037.7,603.4" stroke="#720000" stroke-width="3.6" fill="none" stroke-linejoin="round"/>
<polyline points="171.0,732.0 315.6,730.5 321.6,730.5 325.6,732.0 331.6,732.0 444.0,730.5 450.0,730.5 454.0,732.0 460.0,732.0 572.1,730.5 578.1,730.5 582.1,732.0 588.1,732.0 701.1,730.5 707.1,730.5 711.1,732.0 717.1,732.0 829.2,730.5 835.2,730.5 839.2,732.0 845.2,732.0 958.0,730.5 964.0,730.5 968.0,732.0 974.0,732.0" stroke="#720000" stroke-width="3.6" fill="none" stroke-linejoin="round"/>
<polyline points="187.3,860.5 347.8,859.0 353.8,859.0 357.8,860.5 363.8,860.5 475.9,859.0 481.9,859.0 485.9,860.5 491.9,860.5 604.6,859.0 610.6,859.0 614.6,860.5 620.6,860.5 733.0,859.0 739.0,859.0 743.0,860.5 749.0,860.5 759.0,860.5 767.0,851.9 786.0,851.9 795.0,859.0 861.0,859.0 867.0,859.0 871.0,860.5 877.0,860.5 887.0,860.5 895.0,851.9 914.0,851.9 923.0,859.0 989.8,859.0 995.8,859.0 999.8,860.5 1005.8,860.5" stroke="#720000" stroke-width="3.6" fill="none" stroke-linejoin="round"/>
<polyline points="219.5,989.3 411.8,987.8 417.8,987.8 421.8,989.3 427.8,989.3 539.9,987.8 545.9,987.8 549.9,989.3 555.9,989.3 669.0,987.8 675.0,987.8 679.0,989.3 685.0,989.3 797.0,987.8 803.0,987.8 807.0,989.3 813.0,989.3 925.8,987.8 931.8,987.8 935.8,989.3 941.8,989.3 1053.9,987.8 1059.9,987.8 1063.9,989.3 1069.9,989.3" stroke="#720000" stroke-width="3.6" fill="none" stroke-linejoin="round"/>
<polyline points="315.3,1117.3 460.3,1115.8 466.3,1115.8 470.3,1117.3 476.3,1117.3 717.0,1115.8 723.0,1115.8 727.0,1117.3 733.0,1117.3 957.5,1115.8 963.5,1115.8 967.5,1117.3 973.5,1117.3" stroke="#720000" stroke-width="3.6" fill="none" stroke-linejoin="round"/>
<use href="#swp" x="165" y="460.4"/>
<use href="#swp" x="325" y="460.4"/>
<use href="#swp" x="454" y="460.4"/>
<use href="#swp" x="582.6" y="460.4"/>
<use href="#swp" x="711" y="460.4"/>
<use href="#swp" x="871.2" y="460.4"/>
<use href="#swp" x="1000" y="460.4"/>
<use href="#swp" x="164.8" y="620.4"/>
<use href="#swp" x="292.9" y="620.4"/>
<use href="#swp" x="421.6" y="620.4"/>
<use href="#swp" x="549.7" y="620.4"/>
<use href="#swp" x="678.4" y="620.4"/>
<use href="#swp" x="807.2" y="620.4"/>
<use href="#swp" x="935.3" y="620.4"/>
<use href="#swp" x="1063.7" y="620.4"/>
<use href="#swp" x="197" y="749.0"/>
<use href="#swp" x="357.6" y="749.0"/>
<use href="#swp" x="486" y="749.0"/>
<use href="#swp" x="614.1" y="749.0"/>
<use href="#swp" x="743.1" y="749.0"/>
<use href="#swp" x="871.2" y="749.0"/>
<use href="#swp" x="1000" y="749.0"/>
<use href="#swp" x="213.3" y="877.5"/>
<use href="#swp" x="389.8" y="877.5"/>
<use href="#swp" x="517.9" y="877.5"/>
<use href="#swp" x="646.6" y="877.5"/>
<use href="#swp" x="775" y="877.5"/>
<use href="#swp" x="903" y="877.5"/>
<use href="#swp" x="1031.8" y="877.5"/>
<use href="#swp" x="245.5" y="1006.3"/>
<use href="#swp" x="453.8" y="1006.3"/>
<use href="#swp" x="581.9" y="1006.3"/>
<use href="#swp" x="711" y="1006.3"/>
<use href="#swp" x="839" y="1006.3"/>
<use href="#swp" x="967.8" y="1006.3"/>
<use href="#swp" x="1095.9" y="1006.3"/>
<use href="#swp" x="341.3" y="1134.3"/>
<use href="#swp" x="502.3" y="1134.3"/>
<use href="#swp" x="759" y="1134.3"/>
<use href="#swp" x="999.5" y="1134.3"/>
<use href="#dio" x="114.8" y="528.4"/>
<path d="M183.8 528.4 L183 520.4 L183 425.9" stroke="#006a00" stroke-width="3" fill="none"/>
<use href="#dio" x="276.5" y="528.4"/>
<path d="M345.5 528.4 L343 520.4 L343 425.9" stroke="#006a00" stroke-width="3" fill="none"/>
<use href="#dio" x="397.9" y="528.4"/>
<path d="M466.9 528.4 L472 520.4 L472 425.9" stroke="#006a00" stroke-width="3" fill="none"/>
<use href="#dio" x="530.4" y="528.4"/>
<path d="M599.4 528.4 L600.6 520.4 L600.6 425.9" stroke="#006a00" stroke-width="3" fill="none"/>
<use href="#dio" x="658.3" y="528.4"/>
<path d="M727.3 528.4 L729 520.4 L729 425.9" stroke="#006a00" stroke-width="3" fill="none"/>
<use href="#dio" x="817.2" y="528.4"/>
<path d="M886.2 528.4 L889.2 520.4 L889.2 425.9" stroke="#006a00" stroke-width="3" fill="none"/>
<use href="#dio" x="945.6" y="528.4"/>
<path d="M1014.6 528.4 L1018 520.4 L1018 425.9" stroke="#006a00" stroke-width="3" fill="none"/>
<use href="#dio" x="115.5" y="555.5"/>
<path d="M184.5 555.5 L182.8 563.5 L182.8 585.9" stroke="#006a00" stroke-width="3" fill="none"/>
<use href="#dio" x="243.7" y="554.5"/>
<path d="M312.7 554.5 L310.9 562.5 L310.9 585.9" stroke="#006a00" stroke-width="3" fill="none"/>
<use href="#dio" x="370.8" y="554.6"/>
<path d="M439.8 554.6 L439.6 562.6 L439.6 585.9" stroke="#006a00" stroke-width="3" fill="none"/>
<use href="#dio" x="499.5" y="560.8"/>
<path d="M568.5 560.8 L567.7 568.8 L567.7 585.9" stroke="#006a00" stroke-width="3" fill="none"/>
<use href="#dio" x="627.6" y="560.8"/>
<path d="M696.6 560.8 L696.4 568.8 L696.4 585.9" stroke="#006a00" stroke-width="3" fill="none"/>
<use href="#dio" x="756" y="560.8"/>
<path d="M825 560.8 L825.2 568.8 L825.2 585.9" stroke="#006a00" stroke-width="3" fill="none"/>
<use href="#dio" x="885.8" y="560.8"/>
<path d="M954.8 560.8 L953.3 568.8 L953.3 585.9" stroke="#006a00" stroke-width="3" fill="none"/>
<use href="#dio" x="1013.1" y="560.8"/>
<path d="M1082.1 560.8 L1081.7 568.8 L1081.7 585.9" stroke="#006a00" stroke-width="3" fill="none"/>
<use href="#dio" x="144" y="686.1"/>
<path d="M213 686.1 L215 694.1 L215 714.5" stroke="#006a00" stroke-width="3" fill="none"/>
<use href="#dio" x="303.3" y="688.9"/>
<path d="M372.3 688.9 L375.6 696.9 L375.6 714.5" stroke="#006a00" stroke-width="3" fill="none"/>
<use href="#dio" x="431.3" y="688.9"/>
<path d="M500.3 688.9 L504 696.9 L504 714.5" stroke="#006a00" stroke-width="3" fill="none"/>
<use href="#dio" x="561.1" y="688.9"/>
<path d="M630.1 688.9 L632.1 696.9 L632.1 714.5" stroke="#006a00" stroke-width="3" fill="none"/>
<use href="#dio" x="688.5" y="688.9"/>
<path d="M757.5 688.9 L761.1 696.9 L761.1 714.5" stroke="#006a00" stroke-width="3" fill="none"/>
<use href="#dio" x="817.2" y="688.9"/>
<path d="M886.2 688.9 L889.2 696.9 L889.2 714.5" stroke="#006a00" stroke-width="3" fill="none"/>
<use href="#dio" x="945.3" y="688.9"/>
<path d="M1014.3 688.9 L1018 696.9 L1018 714.5" stroke="#006a00" stroke-width="3" fill="none"/>
<use href="#dio" x="158.6" y="818"/>
<path d="M227.6 818 L231.3 826 L231.3 843.0" stroke="#006a00" stroke-width="3" fill="none"/>
<use href="#dio" x="337.2" y="818"/>
<path d="M406.2 818 L407.8 826 L407.8 843.0" stroke="#006a00" stroke-width="3" fill="none"/>
<use href="#dio" x="466" y="818"/>
<path d="M535 818 L535.9 826 L535.9 843.0" stroke="#006a00" stroke-width="3" fill="none"/>
<use href="#dio" x="594.7" y="818"/>
<path d="M663.7 818 L664.6 826 L664.6 843.0" stroke="#006a00" stroke-width="3" fill="none"/>
<use href="#dio" x="723.8" y="817.3"/>
<path d="M792.8 817.3 L793 825.3 L793 843.0" stroke="#006a00" stroke-width="3" fill="none"/>
<use href="#dio" x="851.1" y="817.3"/>
<path d="M920.1 817.3 L921 825.3 L921 843.0" stroke="#006a00" stroke-width="3" fill="none"/>
<use href="#dio" x="979.2" y="817.3"/>
<path d="M1048.2 817.3 L1049.8 825.3 L1049.8 843.0" stroke="#006a00" stroke-width="3" fill="none"/>
<use href="#dio" x="191.5" y="946.1"/>
<path d="M260.5 946.1 L263.5 954.1 L263.5 971.8" stroke="#006a00" stroke-width="3" fill="none"/>
<use href="#dio" x="404.3" y="946"/>
<path d="M473.3 946 L471.8 954 L471.8 971.8" stroke="#006a00" stroke-width="3" fill="none"/>
<use href="#dio" x="526.5" y="946"/>
<path d="M595.5 946 L599.9 954 L599.9 971.8" stroke="#006a00" stroke-width="3" fill="none"/>
<use href="#dio" x="654.5" y="946"/>
<path d="M723.5 946 L729 954 L729 971.8" stroke="#006a00" stroke-width="3" fill="none"/>
<use href="#dio" x="787.1" y="946"/>
<path d="M856.1 946 L857 954 L857 971.8" stroke="#006a00" stroke-width="3" fill="none"/>
<use href="#dio" x="912.8" y="946"/>
<path d="M981.8 946 L985.8 954 L985.8 971.8" stroke="#006a00" stroke-width="3" fill="none"/>
<use href="#dio" x="1040.5" y="946"/>
<path d="M1109.5 946 L1113.9 954 L1113.9 971.8" stroke="#006a00" stroke-width="3" fill="none"/>
<use href="#dio" x="289.4" y="1074.6"/>
<path d="M358.4 1074.6 L359.3 1082.6 L359.3 1099.8" stroke="#006a00" stroke-width="3" fill="none"/>
<use href="#dio" x="445.2" y="1074.6"/>
<path d="M514.2 1074.6 L520.3 1082.6 L520.3 1099.8" stroke="#006a00" stroke-width="3" fill="none"/>
<use href="#dio" x="708.6" y="1075"/>
<path d="M777.6 1075 L777 1083 L777 1099.8" stroke="#006a00" stroke-width="3" fill="none"/>
<use href="#dio" x="945.8" y="1075"/>
<path d="M1014.8 1075 L1017.5 1083 L1017.5 1099.8" stroke="#006a00" stroke-width="3" fill="none"/>
<g font-family="Liberation Mono" fill="#1e8084" fill-opacity="0.8">
<text x="165" y="408.4" font-size="16.5" text-anchor="middle">SW_PUSH</text>
<text x="131" y="528.9" font-size="15.5" text-anchor="middle">SW_L0</text>
<text x="150" y="549.4" font-size="11.5" text-anchor="middle">D_L0</text>
<text x="325" y="408.4" font-size="16.5" text-anchor="middle">SW_PUSH</text>
<text x="291" y="528.9" font-size="15.5" text-anchor="middle">SW_L10</text>
<text x="310" y="549.4" font-size="11.5" text-anchor="middle">D_L10</text>
<text x="454" y="408.4" font-size="16.5" text-anchor="middle">SW_PUSH</text>
<text x="420" y="528.9" font-size="15.5" text-anchor="middle">SW_L20</text>
<text x="439" y="549.4" font-size="11.5" text-anchor="middle">D_L20</text>
<text x="582.6" y="408.4" font-size="16.5" text-anchor="middle">SW_PUSH</text>
<text x="548.6" y="528.9" font-size="15.5" text-anchor="middle">SW_L30</text>
<text x="567.6" y="549.4" font-size="11.5" text-anchor="middle">D_L30</text>
<text x="711" y="408.4" font-size="16.5" text-anchor="middle">SW_PUSH</text>
<text x="677" y="528.9" font-size="15.5" text-anchor="middle">SW_L40</text>
<text x="696" y="549.4" font-size="11.5" text-anchor="middle">D_L40</text>
<text x="871.2" y="408.4" font-size="16.5" text-anchor="middle">SW_PUSH</text>
<text x="837.2" y="528.9" font-size="15.5" text-anchor="middle">SW_L50</text>
<text x="856.2" y="549.4" font-size="11.5" text-anchor="middle">D_L50</text>
<text x="1000" y="408.4" font-size="16.5" text-anchor="middle">SW_PUSH</text>
<text x="966" y="528.9" font-size="15.5" text-anchor="middle">SW_L60</text>
<text x="985" y="549.4" font-size="11.5" text-anchor="middle">D_L60</text>
<text x="164.8" y="568.4" font-size="16.5" text-anchor="middle">SW_PUSH</text>
<text x="130.8" y="688.9" font-size="15.5" text-anchor="middle">SW_L1</text>
<text x="148.8" y="581.4" font-size="11.5" text-anchor="middle">D_L1</text>
<text x="292.9" y="568.4" font-size="16.5" text-anchor="middle">SW_PUSH</text>
<text x="258.9" y="688.9" font-size="15.5" text-anchor="middle">SW_L11</text>
<text x="276.9" y="581.4" font-size="11.5" text-anchor="middle">D_L11</text>
<text x="421.6" y="568.4" font-size="16.5" text-anchor="middle">SW_PUSH</text>
<text x="387.6" y="688.9" font-size="15.5" text-anchor="middle">SW_L21</text>
<text x="405.6" y="581.4" font-size="11.5" text-anchor="middle">D_L21</text>
<text x="549.7" y="568.4" font-size="16.5" text-anchor="middle">SW_PUSH</text>
<text x="515.7" y="688.9" font-size="15.5" text-anchor="middle">SW_L31</text>
<text x="533.7" y="581.4" font-size="11.5" text-anchor="middle">D_L31</text>
<text x="678.4" y="568.4" font-size="16.5" text-anchor="middle">SW_PUSH</text>
<text x="644.4" y="688.9" font-size="15.5" text-anchor="middle">SW_L41</text>
<text x="662.4" y="581.4" font-size="11.5" text-anchor="middle">D_L41</text>
<text x="807.2" y="568.4" font-size="16.5" text-anchor="middle">SW_PUSH</text>
<text x="773.2" y="688.9" font-size="15.5" text-anchor="middle">SW_L51</text>
<text x="791.2" y="581.4" font-size="11.5" text-anchor="middle">D_L51</text>
<text x="935.3" y="568.4" font-size="16.5" text-anchor="middle">SW_PUSH</text>
<text x="901.3" y="688.9" font-size="15.5" text-anchor="middle">SW_L61</text>
<text x="919.3" y="581.4" font-size="11.5" text-anchor="middle">D_L61</text>
<text x="1063.7" y="568.4" font-size="16.5" text-anchor="middle">SW_PUSH</text>
<text x="1029.7" y="688.9" font-size="15.5" text-anchor="middle">SW_L71</text>
<text x="1047.7" y="581.4" font-size="11.5" text-anchor="middle">D_L71</text>
<text x="197" y="697.0" font-size="16.5" text-anchor="middle">SW_PUSH</text>
<text x="163" y="817.5" font-size="15.5" text-anchor="middle">SW_L2</text>
<text x="181" y="710.0" font-size="11.5" text-anchor="middle">D_L2</text>
<text x="357.6" y="697.0" font-size="16.5" text-anchor="middle">SW_PUSH</text>
<text x="323.6" y="817.5" font-size="15.5" text-anchor="middle">SW_L12</text>
<text x="341.6" y="710.0" font-size="11.5" text-anchor="middle">D_L12</text>
<text x="486" y="697.0" font-size="16.5" text-anchor="middle">SW_PUSH</text>
<text x="452" y="817.5" font-size="15.5" text-anchor="middle">SW_L22</text>
<text x="470" y="710.0" font-size="11.5" text-anchor="middle">D_L22</text>
<text x="614.1" y="697.0" font-size="16.5" text-anchor="middle">SW_PUSH</text>
<text x="580.1" y="817.5" font-size="15.5" text-anchor="middle">SW_L32</text>
<text x="598.1" y="710.0" font-size="11.5" text-anchor="middle">D_L32</text>
<text x="743.1" y="697.0" font-size="16.5" text-anchor="middle">SW_PUSH</text>
<text x="709.1" y="817.5" font-size="15.5" text-anchor="middle">SW_L42</text>
<text x="727.1" y="710.0" font-size="11.5" text-anchor="middle">D_L42</text>
<text x="871.2" y="697.0" font-size="16.5" text-anchor="middle">SW_PUSH</text>
<text x="837.2" y="817.5" font-size="15.5" text-anchor="middle">SW_L52</text>
<text x="855.2" y="710.0" font-size="11.5" text-anchor="middle">D_L52</text>
<text x="1000" y="697.0" font-size="16.5" text-anchor="middle">SW_PUSH</text>
<text x="966" y="817.5" font-size="15.5" text-anchor="middle">SW_L62</text>
<text x="984" y="710.0" font-size="11.5" text-anchor="middle">D_L62</text>
<text x="213.3" y="825.5" font-size="16.5" text-anchor="middle">SW_PUSH</text>
<text x="179.3" y="946.0" font-size="15.5" text-anchor="middle">SW_L3</text>
<text x="197.3" y="838.5" font-size="11.5" text-anchor="middle">D_L3</text>
<text x="389.8" y="825.5" font-size="16.5" text-anchor="middle">SW_PUSH</text>
<text x="355.8" y="946.0" font-size="15.5" text-anchor="middle">SW_L13</text>
<text x="373.8" y="838.5" font-size="11.5" text-anchor="middle">D_L13</text>
<text x="517.9" y="825.5" font-size="16.5" text-anchor="middle">SW_PUSH</text>
<text x="483.9" y="946.0" font-size="15.5" text-anchor="middle">SW_L23</text>
<text x="501.9" y="838.5" font-size="11.5" text-anchor="middle">D_L23</text>
<text x="646.6" y="825.5" font-size="16.5" text-anchor="middle">SW_PUSH</text>
<text x="612.6" y="946.0" font-size="15.5" text-anchor="middle">SW_L33</text>
<text x="630.6" y="838.5" font-size="11.5" text-anchor="middle">D_L33</text>
<text x="775" y="825.5" font-size="16.5" text-anchor="middle">SW_PUSH</text>
<text x="741" y="946.0" font-size="15.5" text-anchor="middle">SW_L43</text>
<text x="759" y="838.5" font-size="11.5" text-anchor="middle">D_L43</text>
<text x="903" y="825.5" font-size="16.5" text-anchor="middle">SW_PUSH</text>
<text x="869" y="946.0" font-size="15.5" text-anchor="middle">SW_L53</text>
<text x="887" y="838.5" font-size="11.5" text-anchor="middle">D_L53</text>
<text x="1031.8" y="825.5" font-size="16.5" text-anchor="middle">SW_PUSH</text>
<text x="997.8" y="946.0" font-size="15.5" text-anchor="middle">SW_L63</text>
<text x="1015.8" y="838.5" font-size="11.5" text-anchor="middle">D_L63</text>
<text x="245.5" y="954.3" font-size="16.5" text-anchor="middle">SW_PUSH</text>
<text x="211.5" y="1074.8" font-size="15.5" text-anchor="middle">SW_L4</text>
<text x="229.5" y="967.3" font-size="11.5" text-anchor="middle">D_L4</text>
<text x="453.8" y="954.3" font-size="16.5" text-anchor="middle">SW_PUSH</text>
<text x="419.8" y="1074.8" font-size="15.5" text-anchor="middle">SW_L14</text>
<text x="437.8" y="967.3" font-size="11.5" text-anchor="middle">D_L14</text>
<text x="581.9" y="954.3" font-size="16.5" text-anchor="middle">SW_PUSH</text>
<text x="547.9" y="1074.8" font-size="15.5" text-anchor="middle">SW_L24</text>
<text x="565.9" y="967.3" font-size="11.5" text-anchor="middle">D_L24</text>
<text x="711" y="954.3" font-size="16.5" text-anchor="middle">SW_PUSH</text>
<text x="677" y="1074.8" font-size="15.5" text-anchor="middle">SW_L34</text>
<text x="695" y="967.3" font-size="11.5" text-anchor="middle">D_L34</text>
<text x="839" y="954.3" font-size="16.5" text-anchor="middle">SW_PUSH</text>
<text x="805" y="1074.8" font-size="15.5" text-anchor="middle">SW_L44</text>
<text x="823" y="967.3" font-size="11.5" text-anchor="middle">D_L44</text>
<text x="967.8" y="954.3" font-size="16.5" text-anchor="middle">SW_PUSH</text>
<text x="933.8" y="1074.8" font-size="15.5" text-anchor="middle">SW_L54</text>
<text x="951.8" y="967.3" font-size="11.5" text-anchor="middle">D_L54</text>
<text x="1095.9" y="954.3" font-size="16.5" text-anchor="middle">SW_PUSH</text>
<text x="1061.9" y="1074.8" font-size="15.5" text-anchor="middle">SW_L64</text>
<text x="1079.9" y="967.3" font-size="11.5" text-anchor="middle">D_L64</text>
<text x="341.3" y="1082.3" font-size="16.5" text-anchor="middle">SW_PUSH</text>
<text x="307.3" y="1202.8" font-size="15.5" text-anchor="middle">SW_L5</text>
<text x="325.3" y="1095.3" font-size="11.5" text-anchor="middle">D_L5</text>
<text x="502.3" y="1082.3" font-size="16.5" text-anchor="middle">SW_PUSH</text>
<text x="468.3" y="1202.8" font-size="15.5" text-anchor="middle">SW_L15</text>
<text x="486.3" y="1095.3" font-size="11.5" text-anchor="middle">D_L15</text>
<text x="759" y="1082.3" font-size="16.5" text-anchor="middle">SW_PUSH</text>
<text x="725" y="1202.8" font-size="15.5" text-anchor="middle">SW_L25</text>
<text x="743" y="1095.3" font-size="11.5" text-anchor="middle">D_L25</text>
<text x="999.5" y="1082.3" font-size="16.5" text-anchor="middle">SW_PUSH</text>
<text x="965.5" y="1202.8" font-size="15.5" text-anchor="middle">SW_55</text>
<text x="983.5" y="1095.3" font-size="11.5" text-anchor="middle">D_L55</text>
</g>
<g font-family="Liberation Mono" fill="#adad00" font-size="11" fill-opacity="0.85">
<text x="145" y="509.4" text-anchor="middle">D</text>
<text x="306" y="509.4" text-anchor="middle">D</text>
<text x="428" y="509.4" text-anchor="middle">D</text>
<text x="560.6" y="509.4" text-anchor="middle">D</text>
<text x="687.5" y="509.4" text-anchor="middle">D</text>
<text x="847.2" y="509.4" text-anchor="middle">D</text>
<text x="968" y="509.4" text-anchor="middle">D</text>
<text x="174.3" y="669.4" text-anchor="middle">D</text>
<text x="332.9" y="669.4" text-anchor="middle">D</text>
<text x="461.6" y="669.4" text-anchor="middle">D</text>
<text x="591.3000000000001" y="669.4" text-anchor="middle">D</text>
<text x="717.9" y="669.4" text-anchor="middle">D</text>
<text x="847.0" y="669.4" text-anchor="middle">D</text>
<text x="975.0" y="669.4" text-anchor="middle">D</text>
<text x="188" y="798.0" text-anchor="middle">D</text>
<text x="366.6" y="798.0" text-anchor="middle">D</text>
<text x="495.4" y="798.0" text-anchor="middle">D</text>
<text x="624.1" y="798.0" text-anchor="middle">D</text>
<text x="753.1" y="798.0" text-anchor="middle">D</text>
<text x="881.2" y="798.0" text-anchor="middle">D</text>
<text x="1009.3" y="798.0" text-anchor="middle">D</text>
<text x="222.0" y="926.5" text-anchor="middle">D</text>
<text x="434.8" y="926.5" text-anchor="middle">D</text>
<text x="555.9" y="926.5" text-anchor="middle">D</text>
<text x="684.6" y="926.5" text-anchor="middle">D</text>
<text x="816.5" y="926.5" text-anchor="middle">D</text>
<text x="943" y="926.5" text-anchor="middle">D</text>
<text x="1070.3" y="926.5" text-anchor="middle">D</text>
<text x="320.5" y="1055.3" text-anchor="middle">D</text>
<text x="475.6" y="1055.3" text-anchor="middle">D</text>
<text x="739" y="1055.3" text-anchor="middle">D</text>
<text x="975.0" y="1055.3" text-anchor="middle">D</text>
</g>
<g clip-path="url(#zclip)"><circle cx="857.4" cy="325.7" r="9.5" fill="#000"/></g>
<circle cx="127" cy="325.8" r="6" fill="#9484a0"/><circle cx="127" cy="325.8" r="3.8" fill="#1e8084"/>
<circle cx="471" cy="325.5" r="6" fill="#9484a0"/><circle cx="471" cy="325.5" r="3.8" fill="#1e8084"/>
<circle cx="515" cy="325.5" r="6" fill="#9484a0"/><circle cx="515" cy="325.5" r="3.8" fill="#1e8084"/>
<circle cx="857.4" cy="325.7" r="6" fill="#9484a0"/><circle cx="857.4" cy="325.7" r="3.8" fill="#1e8084"/>
<g font-family="Liberation Mono" font-size="11"><text transform="translate(133 348) rotate(-90)" fill="#adad00">NiMH1.2V</text><text transform="translate(124 340) rotate(-90)" fill="#1e8084">BT2</text><text transform="translate(521 348) rotate(-90)" fill="#adad00">NiMH1.2V</text><text transform="translate(512 340) rotate(-90)" fill="#1e8084">BT3</text></g>
<circle cx="196.6" cy="328.9" r="20.5" fill="none" stroke="#12128c" stroke-width="2.6"/>
<circle cx="196.6" cy="328.9" r="10" fill="#137476"/><circle cx="196.6" cy="328.9" r="7.5" fill="none" stroke="#2a9a98" stroke-width="1"/>
<circle cx="1203.7" cy="379.4" r="14" fill="#000"/>
<circle cx="1203.7" cy="379.4" r="20.5" fill="none" stroke="#12128c" stroke-width="2.6"/>
<circle cx="1203.7" cy="379.4" r="10" fill="#137476"/><circle cx="1203.7" cy="379.4" r="7.5" fill="none" stroke="#2a9a98" stroke-width="1"/>
<circle cx="125.7" cy="1190.6" r="20.5" fill="none" stroke="#12128c" stroke-width="2.6"/>
<circle cx="125.7" cy="1190.6" r="10" fill="#137476"/><circle cx="125.7" cy="1190.6" r="7.5" fill="none" stroke="#2a9a98" stroke-width="1"/>
<circle cx="1217.2" cy="1180.7" r="20.5" fill="none" stroke="#12128c" stroke-width="2.6"/>
<circle cx="1217.2" cy="1180.7" r="10" fill="#137476"/><circle cx="1217.2" cy="1180.7" r="7.5" fill="none" stroke="#2a9a98" stroke-width="1"/>
<g font-family="Liberation Mono" font-size="10"><text x="196" y="306" fill="#1e8084" text-anchor="middle">REF**</text><text x="203" y="367" fill="#adad00" text-anchor="middle">MountingHole_3mm</text><text x="1203" y="358" fill="#1e8084" text-anchor="middle">REF**</text><text x="1210" y="418" fill="#adad00" text-anchor="middle">MountingHole_3mm</text><text x="125" y="1168" fill="#1e8084" text-anchor="middle">REF**</text><text x="132" y="1229" fill="#adad00" text-anchor="middle">MountingHole_3mm</text><text x="1217" y="1158" fill="#1e8084" text-anchor="middle">REF**</text><text x="1224" y="1219" fill="#adad00" text-anchor="middle">MountingHole_3mm</text><text x="955" y="248" fill="#1e8084" text-anchor="middle">CONBUS1</text><text x="955" y="262" fill="#adad00" text-anchor="middle">CONN_01X06</text><text x="1163" y="270" fill="#1e8084" text-anchor="middle">J1</text><text x="1163" y="364" fill="#adad00" text-anchor="middle">RJ45</text><text x="1178" y="590" fill="#adad00" text-anchor="middle">0.1u</text><text x="1178" y="625" fill="#1e8084" text-anchor="middle">C1</text><text x="1224" y="898" fill="#adad00" text-anchor="middle">MCP23017</text><text x="1224" y="909" fill="#1e8084" text-anchor="middle">U2</text></g>
<rect x="941.1" y="266" width="110.8" height="24.2" fill="none" stroke="#a6a6a6" stroke-width="1"/>
<rect x="947" y="270" width="99" height="17" fill="none" stroke="#1e8084" stroke-width="1"/>
<rect x="947.8" y="273.2" width="11" height="11" fill="#9484a0"/><circle cx="953.3" cy="278.7" r="4.3" fill="#1e8084"/>
<circle cx="970.5" cy="278.7" r="6.3" fill="#9484a0"/><circle cx="970.5" cy="278.7" r="4.3" fill="#1e8084"/>
<circle cx="987.6999999999999" cy="278.7" r="6.3" fill="#9484a0"/><circle cx="987.6999999999999" cy="278.7" r="4.3" fill="#1e8084"/>
<circle cx="1004.9" cy="278.7" r="6.3" fill="#9484a0"/><circle cx="1004.9" cy="278.7" r="4.3" fill="#1e8084"/>
<circle cx="1022.0999999999999" cy="278.7" r="6.3" fill="#9484a0"/><circle cx="1022.0999999999999" cy="278.7" r="4.3" fill="#1e8084"/>
<circle cx="1039.3" cy="278.7" r="6.3" fill="#9484a0"/><circle cx="1039.3" cy="278.7" r="4.3" fill="#1e8084"/>
<circle cx="1113" cy="291.8" r="8" fill="#1e8084"/><circle cx="1213" cy="291.8" r="8" fill="#1e8084"/>
<circle cx="1141.8" cy="307.8" r="4.6" fill="#9484a0"/><circle cx="1141.8" cy="307.8" r="3.6" fill="#1e8084"/>
<circle cx="1132.8" cy="324.9" r="4.6" fill="#9484a0"/><circle cx="1132.8" cy="324.9" r="3.6" fill="#1e8084"/>
<circle cx="1158.8999999999999" cy="307.8" r="4.6" fill="#9484a0"/><circle cx="1158.8999999999999" cy="307.8" r="3.6" fill="#1e8084"/>
<circle cx="1150.1" cy="324.9" r="4.6" fill="#9484a0"/><circle cx="1150.1" cy="324.9" r="3.6" fill="#1e8084"/>
<circle cx="1176.0" cy="307.8" r="4.6" fill="#9484a0"/><circle cx="1176.0" cy="307.8" r="3.6" fill="#1e8084"/>
<circle cx="1167.3999999999999" cy="324.9" r="4.6" fill="#9484a0"/><circle cx="1167.3999999999999" cy="324.9" r="3.6" fill="#1e8084"/>
<circle cx="1193.1" cy="307.8" r="4.6" fill="#9484a0"/><circle cx="1193.1" cy="307.8" r="3.6" fill="#1e8084"/>
<circle cx="1184.7" cy="324.9" r="4.6" fill="#9484a0"/><circle cx="1184.7" cy="324.9" r="3.6" fill="#1e8084"/>
<circle cx="1108.2" cy="324.9" r="7.5" fill="#9484a0"/><circle cx="1108.2" cy="324.9" r="6" fill="#1e8084"/>
<circle cx="1217.8" cy="324.9" r="7.5" fill="#9484a0"/><circle cx="1217.8" cy="324.9" r="6" fill="#1e8084"/>
<rect x="1163.7" y="593.3" width="29.9" height="20" fill="none" stroke="#a6a6a6" stroke-width="1"/>
<circle cx="1169.9" cy="602.9" r="3.8" fill="#9484a0"/><circle cx="1169.9" cy="602.9" r="2.4" fill="#1e8084"/>
<rect x="1182.6" y="598.9" width="8" height="8" fill="#9484a0"/><circle cx="1186.6" cy="602.9" r="2.4" fill="#1e8084"/>
<rect x="1163.7" y="629.3" width="69.8" height="256.4" fill="none" stroke="#a6a6a6" stroke-width="1"/>
<path d="M1173.3 638.6 V630.6 H1223.6 V638.6" fill="none" stroke="#1e8084" stroke-width="1"/>
<ellipse cx="1172.3" cy="645.7" rx="7.5" ry="5.3" fill="#9484a0"/><circle cx="1172.3" cy="645.7" r="2.8" fill="#1e8084"/>
<ellipse cx="1223.9" cy="645.7" rx="7.5" ry="5.3" fill="#9484a0"/><circle cx="1223.9" cy="645.7" r="2.8" fill="#1e8084"/>
<ellipse cx="1172.3" cy="662.83" rx="7.5" ry="5.3" fill="#9484a0"/><circle cx="1172.3" cy="662.83" r="2.8" fill="#1e8084"/>
<ellipse cx="1223.9" cy="662.83" rx="7.5" ry="5.3" fill="#9484a0"/><circle cx="1223.9" cy="662.83" r="2.8" fill="#1e8084"/>
<ellipse cx="1172.3" cy="679.96" rx="7.5" ry="5.3" fill="#9484a0"/><circle cx="1172.3" cy="679.96" r="2.8" fill="#1e8084"/>
<ellipse cx="1223.9" cy="679.96" rx="7.5" ry="5.3" fill="#9484a0"/><circle cx="1223.9" cy="679.96" r="2.8" fill="#1e8084"/>
<ellipse cx="1172.3" cy="697.09" rx="7.5" ry="5.3" fill="#9484a0"/><circle cx="1172.3" cy="697.09" r="2.8" fill="#1e8084"/>
<ellipse cx="1223.9" cy="697.09" rx="7.5" ry="5.3" fill="#9484a0"/><circle cx="1223.9" cy="697.09" r="2.8" fill="#1e8084"/>
<ellipse cx="1172.3" cy="714.22" rx="7.5" ry="5.3" fill="#9484a0"/><circle cx="1172.3" cy="714.22" r="2.8" fill="#1e8084"/>
<ellipse cx="1223.9" cy="714.22" rx="7.5" ry="5.3" fill="#9484a0"/><circle cx="1223.9" cy="714.22" r="2.8" fill="#1e8084"/>
<ellipse cx="1172.3" cy="731.35" rx="7.5" ry="5.3" fill="#9484a0"/><circle cx="1172.3" cy="731.35" r="2.8" fill="#1e8084"/>
<ellipse cx="1223.9" cy="731.35" rx="7.5" ry="5.3" fill="#9484a0"/><circle cx="1223.9" cy="731.35" r="2.8" fill="#1e8084"/>
<ellipse cx="1172.3" cy="748.48" rx="7.5" ry="5.3" fill="#9484a0"/><circle cx="1172.3" cy="748.48" r="2.8" fill="#1e8084"/>
<ellipse cx="1223.9" cy="748.48" rx="7.5" ry="5.3" fill="#9484a0"/><circle cx="1223.9" cy="748.48" r="2.8" fill="#1e8084"/>
<ellipse cx="1172.3" cy="765.61" rx="7.5" ry="5.3" fill="#9484a0"/><circle cx="1172.3" cy="765.61" r="2.8" fill="#1e8084"/>
<ellipse cx="1223.9" cy="765.61" rx="7.5" ry="5.3" fill="#9484a0"/><circle cx="1223.9" cy="765.61" r="2.8" fill="#1e8084"/>
<ellipse cx="1172.3" cy="782.74" rx="7.5" ry="5.3" fill="#9484a0"/><circle cx="1172.3" cy="782.74" r="2.8" fill="#1e8084"/>
<ellipse cx="1223.9" cy="782.74" rx="7.5" ry="5.3" fill="#9484a0"/><circle cx="1223.9" cy="782.74" r="2.8" fill="#1e8084"/>
<ellipse cx="1172.3" cy="799.87" rx="7.5" ry="5.3" fill="#9484a0"/><circle cx="1172.3" cy="799.87" r="2.8" fill="#1e8084"/>
<ellipse cx="1223.9" cy="799.87" rx="7.5" ry="5.3" fill="#9484a0"/><circle cx="1223.9" cy="799.87" r="2.8" fill="#1e8084"/>
<ellipse cx="1172.3" cy="817.0" rx="7.5" ry="5.3" fill="#9484a0"/><circle cx="1172.3" cy="817.0" r="2.8" fill="#1e8084"/>
<ellipse cx="1223.9" cy="817.0" rx="7.5" ry="5.3" fill="#9484a0"/><circle cx="1223.9" cy="817.0" r="2.8" fill="#1e8084"/>
<ellipse cx="1172.3" cy="834.13" rx="7.5" ry="5.3" fill="#9484a0"/><circle cx="1172.3" cy="834.13" r="2.8" fill="#1e8084"/>
<ellipse cx="1223.9" cy="834.13" rx="7.5" ry="5.3" fill="#9484a0"/><circle cx="1223.9" cy="834.13" r="2.8" fill="#1e8084"/>
<ellipse cx="1172.3" cy="851.26" rx="7.5" ry="5.3" fill="#9484a0"/><circle cx="1172.3" cy="851.26" r="2.8" fill="#1e8084"/>
<ellipse cx="1223.9" cy="851.26" rx="7.5" ry="5.3" fill="#9484a0"/><circle cx="1223.9" cy="851.26" r="2.8" fill="#1e8084"/>
<ellipse cx="1172.3" cy="868.3900000000001" rx="7.5" ry="5.3" fill="#9484a0"/><circle cx="1172.3" cy="868.3900000000001" r="2.8" fill="#1e8084"/>
<ellipse cx="1223.9" cy="868.3900000000001" rx="7.5" ry="5.3" fill="#9484a0"/><circle cx="1223.9" cy="868.3900000000001" r="2.8" fill="#1e8084"/>
<line x1="996.4" y1="313.7" x2="996.4" y2="354.3" stroke="#720000" stroke-width="3"/>
<line x1="1029.9" y1="323.3" x2="1057.3" y2="323.3" stroke="#720000" stroke-width="3"/>
<line x1="1152.1" y1="444.5" x2="1175.9" y2="444.5" stroke="#720000" stroke-width="3"/>
<line x1="1152.1" y1="457.4" x2="1194.9" y2="457.4" stroke="#720000" stroke-width="3"/>
<line x1="1149.2" y1="555.6" x2="1169.7" y2="555.6" stroke="#720000" stroke-width="3"/>
<g clip-path="url(#zclip)"><circle cx="996.4" cy="313.7" r="9.5" fill="#000"/><circle cx="996.4" cy="354.3" r="9.5" fill="#000"/><circle cx="1029.9" cy="323.3" r="9.5" fill="#000"/><circle cx="1057.3" cy="323.3" r="9.5" fill="#000"/><circle cx="1152.1" cy="444.5" r="9.5" fill="#000"/><circle cx="1175.9" cy="444.5" r="9.5" fill="#000"/><circle cx="1152.1" cy="457.4" r="9.5" fill="#000"/><circle cx="1194.9" cy="457.4" r="9.5" fill="#000"/><circle cx="1149.2" cy="555.6" r="9.5" fill="#000"/><circle cx="1169.7" cy="555.6" r="9.5" fill="#000"/></g>
<circle cx="996.4" cy="313.7" r="5.6" fill="#a8a0a8"/><circle cx="996.4" cy="313.7" r="3.6" fill="#9a7a28"/>
<circle cx="996.4" cy="354.3" r="5.6" fill="#a8a0a8"/><circle cx="996.4" cy="354.3" r="3.6" fill="#9a7a28"/>
<circle cx="1029.9" cy="323.3" r="5.6" fill="#a8a0a8"/><circle cx="1029.9" cy="323.3" r="3.6" fill="#9a7a28"/>
<circle cx="1057.3" cy="323.3" r="5.6" fill="#a8a0a8"/><circle cx="1057.3" cy="323.3" r="3.6" fill="#9a7a28"/>
<circle cx="1152.1" cy="444.5" r="5.6" fill="#a8a0a8"/><circle cx="1152.1" cy="444.5" r="3.6" fill="#9a7a28"/>
<circle cx="1175.9" cy="444.5" r="5.6" fill="#a8a0a8"/><circle cx="1175.9" cy="444.5" r="3.6" fill="#9a7a28"/>
<circle cx="1152.1" cy="457.4" r="5.6" fill="#a8a0a8"/><circle cx="1152.1" cy="457.4" r="3.6" fill="#9a7a28"/>
<circle cx="1194.9" cy="457.4" r="5.6" fill="#a8a0a8"/><circle cx="1194.9" cy="457.4" r="3.6" fill="#9a7a28"/>
<circle cx="1149.2" cy="555.6" r="5.6" fill="#a8a0a8"/><circle cx="1149.2" cy="555.6" r="3.6" fill="#9a7a28"/>
<circle cx="1169.7" cy="555.6" r="5.6" fill="#a8a0a8"/><circle cx="1169.7" cy="555.6" r="3.6" fill="#9a7a28"/>
<g font-family="Liberation Mono" fill="#adad00" font-size="11" fill-opacity="0.85"><text x="915" y="541" text-anchor="middle">D</text><text x="1043" y="541" text-anchor="middle">D</text><text x="145" y="535" text-anchor="middle">D</text></g>
<g stroke="#fff" stroke-width="1.2" fill="none"><circle cx="111.5" cy="407" r="13"/><path d="M97 393 L126 422 M126 393 L97 422"/></g>
</g></svg>
</body></html>
